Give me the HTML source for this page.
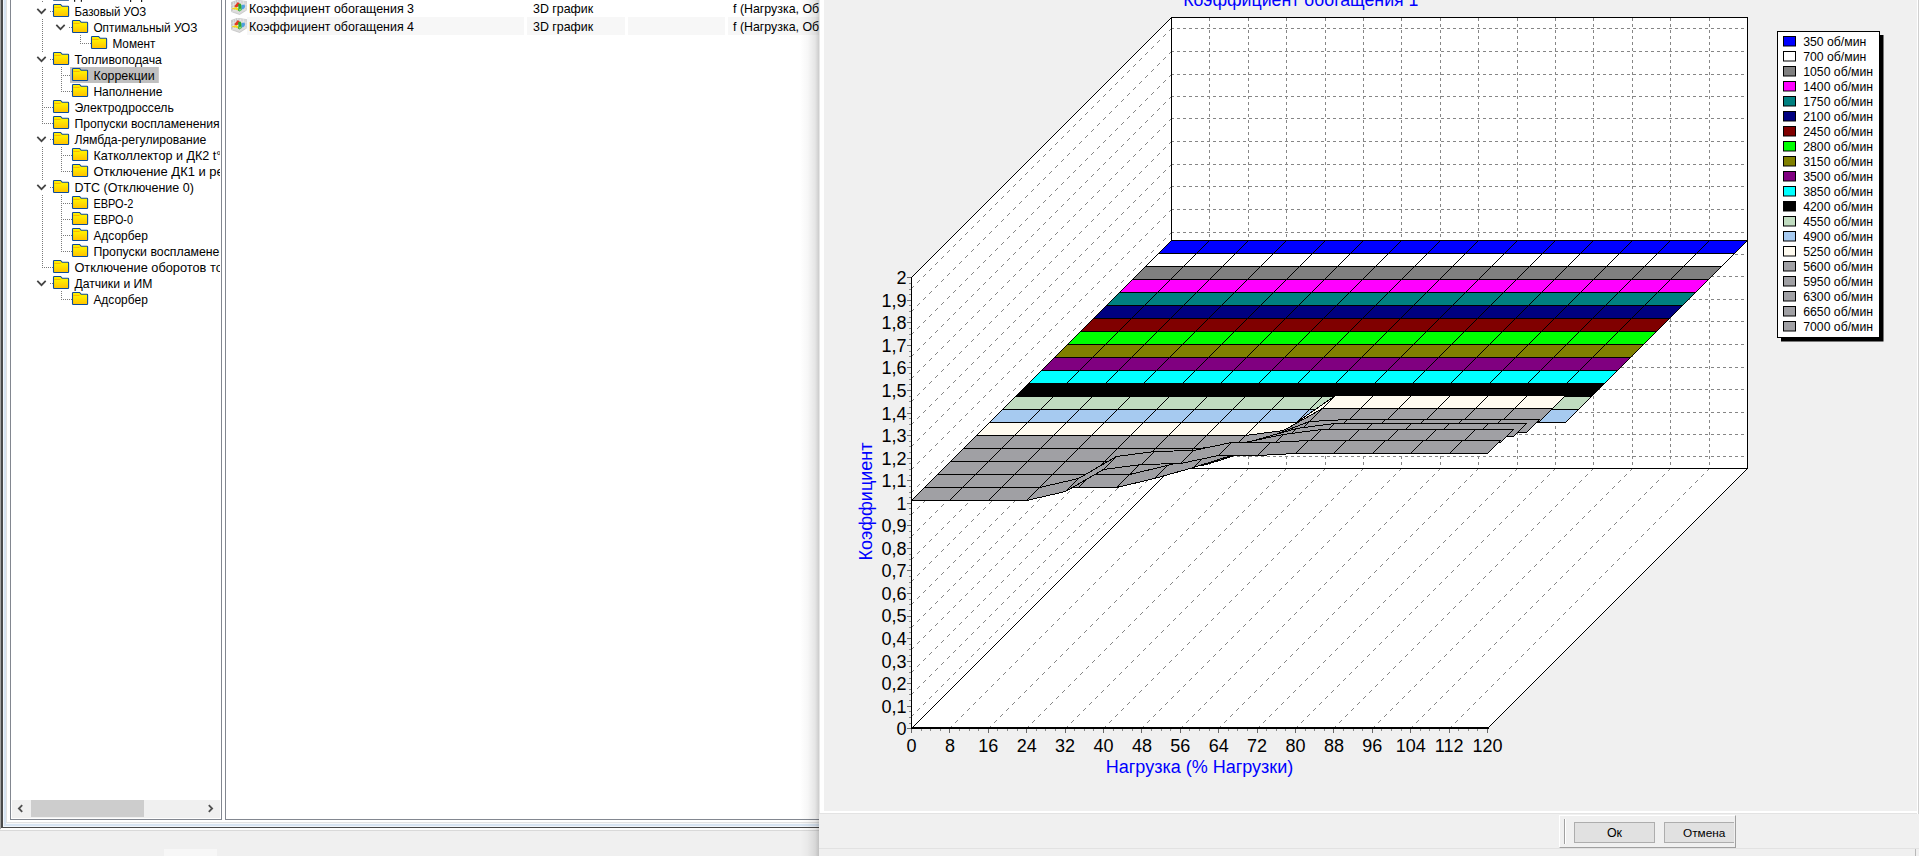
<!DOCTYPE html>
<html><head><meta charset="utf-8"><title>chart</title>
<style>
html,body{margin:0;padding:0;}
body{width:1919px;height:856px;overflow:hidden;background:#f0f0f0;position:relative;font-family:"Liberation Sans", sans-serif;font-size:12.4px;color:#000;}
.abs{position:absolute;}
.lt{position:absolute;white-space:nowrap;line-height:18px;height:18px;margin-top:1px;}
</style></head><body>
<!-- main window left frame -->
<div class="abs" style="left:0;top:0;width:819px;height:828px;background:#fff"></div>
<div class="abs" style="left:0;top:0;width:1px;height:829px;background:#a4a4a4"></div>
<div class="abs" style="left:1px;top:0;width:2px;height:828px;background:#4a4a4a"></div>
<div class="abs" style="left:3px;top:0;width:1px;height:827px;background:#f0f5fc"></div>
<div class="abs" style="left:4px;top:0;width:2px;height:826px;background:#d7e4f2"></div>
<div class="abs" style="left:6px;top:0;width:1px;height:823px;background:#e2e2e2"></div>
<!-- bottom frame lines -->
<div class="abs" style="left:6px;top:822px;width:813px;height:1px;background:#e2e2e2"></div>
<div class="abs" style="left:6px;top:823px;width:813px;height:1px;background:#f6f8fb"></div>
<div class="abs" style="left:4px;top:824px;width:815px;height:2px;background:#d7e4f2"></div>
<div class="abs" style="left:3px;top:826px;width:816px;height:1px;background:#f0f5fc"></div>
<div class="abs" style="left:1px;top:827px;width:818px;height:1px;background:#4a4a4a"></div>
<div class="abs" style="left:1px;top:828px;width:818px;height:2px;background:#fdfdfd"></div>
<div class="abs" style="left:0;top:830px;width:819px;height:1px;background:#d9d9d9"></div>
<!-- tree pane -->
<div class="abs" style="left:10px;top:-2px;width:210px;height:820px;border:1px solid #828790;background:#fff;overflow:hidden"></div>
<div class="abs" style="left:11px;top:0;width:209px;height:800px;overflow:hidden"><div style="position:absolute;left:-11px;top:0"><svg width="221" height="797" viewBox="0 0 221 797" style="position:absolute;left:0;top:0"><defs><linearGradient id="fg" x1="0" y1="0" x2="0" y2="1"><stop offset="0" stop-color="#fff400"/><stop offset="0.35" stop-color="#ffec00"/><stop offset="1" stop-color="#ffc000"/></linearGradient></defs><g fill="#7a7a7a"><rect x="50" y="11" width="1" height="1"/><rect x="52" y="11" width="1" height="1"/><rect x="69" y="27" width="1" height="1"/><rect x="71" y="27" width="1" height="1"/><rect x="80" y="43" width="1" height="1"/><rect x="82" y="43" width="1" height="1"/><rect x="84" y="43" width="1" height="1"/><rect x="86" y="43" width="1" height="1"/><rect x="88" y="43" width="1" height="1"/><rect x="90" y="43" width="1" height="1"/><rect x="50" y="59" width="1" height="1"/><rect x="52" y="59" width="1" height="1"/><rect x="61" y="75" width="1" height="1"/><rect x="63" y="75" width="1" height="1"/><rect x="65" y="75" width="1" height="1"/><rect x="67" y="75" width="1" height="1"/><rect x="69" y="75" width="1" height="1"/><rect x="71" y="75" width="1" height="1"/><rect x="61" y="91" width="1" height="1"/><rect x="63" y="91" width="1" height="1"/><rect x="65" y="91" width="1" height="1"/><rect x="67" y="91" width="1" height="1"/><rect x="69" y="91" width="1" height="1"/><rect x="71" y="91" width="1" height="1"/><rect x="42" y="107" width="1" height="1"/><rect x="44" y="107" width="1" height="1"/><rect x="46" y="107" width="1" height="1"/><rect x="48" y="107" width="1" height="1"/><rect x="50" y="107" width="1" height="1"/><rect x="52" y="107" width="1" height="1"/><rect x="42" y="123" width="1" height="1"/><rect x="44" y="123" width="1" height="1"/><rect x="46" y="123" width="1" height="1"/><rect x="48" y="123" width="1" height="1"/><rect x="50" y="123" width="1" height="1"/><rect x="52" y="123" width="1" height="1"/><rect x="50" y="139" width="1" height="1"/><rect x="52" y="139" width="1" height="1"/><rect x="61" y="155" width="1" height="1"/><rect x="63" y="155" width="1" height="1"/><rect x="65" y="155" width="1" height="1"/><rect x="67" y="155" width="1" height="1"/><rect x="69" y="155" width="1" height="1"/><rect x="71" y="155" width="1" height="1"/><rect x="61" y="171" width="1" height="1"/><rect x="63" y="171" width="1" height="1"/><rect x="65" y="171" width="1" height="1"/><rect x="67" y="171" width="1" height="1"/><rect x="69" y="171" width="1" height="1"/><rect x="71" y="171" width="1" height="1"/><rect x="50" y="187" width="1" height="1"/><rect x="52" y="187" width="1" height="1"/><rect x="61" y="203" width="1" height="1"/><rect x="63" y="203" width="1" height="1"/><rect x="65" y="203" width="1" height="1"/><rect x="67" y="203" width="1" height="1"/><rect x="69" y="203" width="1" height="1"/><rect x="71" y="203" width="1" height="1"/><rect x="61" y="219" width="1" height="1"/><rect x="63" y="219" width="1" height="1"/><rect x="65" y="219" width="1" height="1"/><rect x="67" y="219" width="1" height="1"/><rect x="69" y="219" width="1" height="1"/><rect x="71" y="219" width="1" height="1"/><rect x="61" y="235" width="1" height="1"/><rect x="63" y="235" width="1" height="1"/><rect x="65" y="235" width="1" height="1"/><rect x="67" y="235" width="1" height="1"/><rect x="69" y="235" width="1" height="1"/><rect x="71" y="235" width="1" height="1"/><rect x="61" y="251" width="1" height="1"/><rect x="63" y="251" width="1" height="1"/><rect x="65" y="251" width="1" height="1"/><rect x="67" y="251" width="1" height="1"/><rect x="69" y="251" width="1" height="1"/><rect x="71" y="251" width="1" height="1"/><rect x="42" y="267" width="1" height="1"/><rect x="44" y="267" width="1" height="1"/><rect x="46" y="267" width="1" height="1"/><rect x="48" y="267" width="1" height="1"/><rect x="50" y="267" width="1" height="1"/><rect x="52" y="267" width="1" height="1"/><rect x="50" y="283" width="1" height="1"/><rect x="52" y="283" width="1" height="1"/><rect x="61" y="299" width="1" height="1"/><rect x="63" y="299" width="1" height="1"/><rect x="65" y="299" width="1" height="1"/><rect x="67" y="299" width="1" height="1"/><rect x="69" y="299" width="1" height="1"/><rect x="71" y="299" width="1" height="1"/><rect x="42" y="1" width="1" height="1"/><rect x="42" y="19" width="1" height="1"/><rect x="42" y="21" width="1" height="1"/><rect x="42" y="23" width="1" height="1"/><rect x="42" y="25" width="1" height="1"/><rect x="42" y="27" width="1" height="1"/><rect x="42" y="29" width="1" height="1"/><rect x="42" y="31" width="1" height="1"/><rect x="42" y="33" width="1" height="1"/><rect x="42" y="35" width="1" height="1"/><rect x="42" y="37" width="1" height="1"/><rect x="42" y="39" width="1" height="1"/><rect x="42" y="41" width="1" height="1"/><rect x="42" y="43" width="1" height="1"/><rect x="42" y="45" width="1" height="1"/><rect x="42" y="47" width="1" height="1"/><rect x="42" y="49" width="1" height="1"/><rect x="42" y="51" width="1" height="1"/><rect x="42" y="67" width="1" height="1"/><rect x="42" y="69" width="1" height="1"/><rect x="42" y="71" width="1" height="1"/><rect x="42" y="73" width="1" height="1"/><rect x="42" y="75" width="1" height="1"/><rect x="42" y="77" width="1" height="1"/><rect x="42" y="79" width="1" height="1"/><rect x="42" y="81" width="1" height="1"/><rect x="42" y="83" width="1" height="1"/><rect x="42" y="85" width="1" height="1"/><rect x="42" y="87" width="1" height="1"/><rect x="42" y="89" width="1" height="1"/><rect x="42" y="91" width="1" height="1"/><rect x="42" y="93" width="1" height="1"/><rect x="42" y="95" width="1" height="1"/><rect x="42" y="97" width="1" height="1"/><rect x="42" y="99" width="1" height="1"/><rect x="42" y="101" width="1" height="1"/><rect x="42" y="103" width="1" height="1"/><rect x="42" y="105" width="1" height="1"/><rect x="42" y="107" width="1" height="1"/><rect x="42" y="109" width="1" height="1"/><rect x="42" y="111" width="1" height="1"/><rect x="42" y="113" width="1" height="1"/><rect x="42" y="115" width="1" height="1"/><rect x="42" y="117" width="1" height="1"/><rect x="42" y="119" width="1" height="1"/><rect x="42" y="121" width="1" height="1"/><rect x="42" y="123" width="1" height="1"/><rect x="42" y="147" width="1" height="1"/><rect x="42" y="149" width="1" height="1"/><rect x="42" y="151" width="1" height="1"/><rect x="42" y="153" width="1" height="1"/><rect x="42" y="155" width="1" height="1"/><rect x="42" y="157" width="1" height="1"/><rect x="42" y="159" width="1" height="1"/><rect x="42" y="161" width="1" height="1"/><rect x="42" y="163" width="1" height="1"/><rect x="42" y="165" width="1" height="1"/><rect x="42" y="167" width="1" height="1"/><rect x="42" y="169" width="1" height="1"/><rect x="42" y="171" width="1" height="1"/><rect x="42" y="173" width="1" height="1"/><rect x="42" y="175" width="1" height="1"/><rect x="42" y="177" width="1" height="1"/><rect x="42" y="179" width="1" height="1"/><rect x="42" y="195" width="1" height="1"/><rect x="42" y="197" width="1" height="1"/><rect x="42" y="199" width="1" height="1"/><rect x="42" y="201" width="1" height="1"/><rect x="42" y="203" width="1" height="1"/><rect x="42" y="205" width="1" height="1"/><rect x="42" y="207" width="1" height="1"/><rect x="42" y="209" width="1" height="1"/><rect x="42" y="211" width="1" height="1"/><rect x="42" y="213" width="1" height="1"/><rect x="42" y="215" width="1" height="1"/><rect x="42" y="217" width="1" height="1"/><rect x="42" y="219" width="1" height="1"/><rect x="42" y="221" width="1" height="1"/><rect x="42" y="223" width="1" height="1"/><rect x="42" y="225" width="1" height="1"/><rect x="42" y="227" width="1" height="1"/><rect x="42" y="229" width="1" height="1"/><rect x="42" y="231" width="1" height="1"/><rect x="42" y="233" width="1" height="1"/><rect x="42" y="235" width="1" height="1"/><rect x="42" y="237" width="1" height="1"/><rect x="42" y="239" width="1" height="1"/><rect x="42" y="241" width="1" height="1"/><rect x="42" y="243" width="1" height="1"/><rect x="42" y="245" width="1" height="1"/><rect x="42" y="247" width="1" height="1"/><rect x="42" y="249" width="1" height="1"/><rect x="42" y="251" width="1" height="1"/><rect x="42" y="253" width="1" height="1"/><rect x="42" y="255" width="1" height="1"/><rect x="42" y="257" width="1" height="1"/><rect x="42" y="259" width="1" height="1"/><rect x="42" y="261" width="1" height="1"/><rect x="42" y="263" width="1" height="1"/><rect x="42" y="265" width="1" height="1"/><rect x="42" y="267" width="1" height="1"/><rect x="61" y="67" width="1" height="1"/><rect x="61" y="69" width="1" height="1"/><rect x="61" y="71" width="1" height="1"/><rect x="61" y="73" width="1" height="1"/><rect x="61" y="75" width="1" height="1"/><rect x="61" y="77" width="1" height="1"/><rect x="61" y="79" width="1" height="1"/><rect x="61" y="81" width="1" height="1"/><rect x="61" y="83" width="1" height="1"/><rect x="61" y="85" width="1" height="1"/><rect x="61" y="87" width="1" height="1"/><rect x="61" y="89" width="1" height="1"/><rect x="61" y="91" width="1" height="1"/><rect x="61" y="147" width="1" height="1"/><rect x="61" y="149" width="1" height="1"/><rect x="61" y="151" width="1" height="1"/><rect x="61" y="153" width="1" height="1"/><rect x="61" y="155" width="1" height="1"/><rect x="61" y="157" width="1" height="1"/><rect x="61" y="159" width="1" height="1"/><rect x="61" y="161" width="1" height="1"/><rect x="61" y="163" width="1" height="1"/><rect x="61" y="165" width="1" height="1"/><rect x="61" y="167" width="1" height="1"/><rect x="61" y="169" width="1" height="1"/><rect x="61" y="171" width="1" height="1"/><rect x="61" y="195" width="1" height="1"/><rect x="61" y="197" width="1" height="1"/><rect x="61" y="199" width="1" height="1"/><rect x="61" y="201" width="1" height="1"/><rect x="61" y="203" width="1" height="1"/><rect x="61" y="205" width="1" height="1"/><rect x="61" y="207" width="1" height="1"/><rect x="61" y="209" width="1" height="1"/><rect x="61" y="211" width="1" height="1"/><rect x="61" y="213" width="1" height="1"/><rect x="61" y="215" width="1" height="1"/><rect x="61" y="217" width="1" height="1"/><rect x="61" y="219" width="1" height="1"/><rect x="61" y="221" width="1" height="1"/><rect x="61" y="223" width="1" height="1"/><rect x="61" y="225" width="1" height="1"/><rect x="61" y="227" width="1" height="1"/><rect x="61" y="229" width="1" height="1"/><rect x="61" y="231" width="1" height="1"/><rect x="61" y="233" width="1" height="1"/><rect x="61" y="235" width="1" height="1"/><rect x="61" y="237" width="1" height="1"/><rect x="61" y="239" width="1" height="1"/><rect x="61" y="241" width="1" height="1"/><rect x="61" y="243" width="1" height="1"/><rect x="61" y="245" width="1" height="1"/><rect x="61" y="247" width="1" height="1"/><rect x="61" y="249" width="1" height="1"/><rect x="61" y="251" width="1" height="1"/><rect x="61" y="291" width="1" height="1"/><rect x="61" y="293" width="1" height="1"/><rect x="61" y="295" width="1" height="1"/><rect x="61" y="297" width="1" height="1"/><rect x="61" y="299" width="1" height="1"/><rect x="80" y="35" width="1" height="1"/><rect x="80" y="37" width="1" height="1"/><rect x="80" y="39" width="1" height="1"/><rect x="80" y="41" width="1" height="1"/><rect x="80" y="43" width="1" height="1"/></g><g transform="translate(53 4)"><path d="M1.2,0.5 H7.6 L9.2,2.3 H15 Q15.6,2.3 15.6,3 V11.8 Q15.6,12.5 15,12.5 H1.2 Q0.5,12.5 0.5,11.8 V1.2 Q0.5,0.5 1.2,0.5 Z" fill="url(#fg)" stroke="#0c4a98" stroke-width="1.1"/><path d="M1.3,3.4 H7.6" stroke="#f7a800" stroke-width="0.9"/></g><path d="M37.3,8.8 L41.5,13.2 L45.7,8.8" stroke="#444" stroke-width="1.7" fill="none"/><g transform="translate(72 20)"><path d="M1.2,0.5 H7.6 L9.2,2.3 H15 Q15.6,2.3 15.6,3 V11.8 Q15.6,12.5 15,12.5 H1.2 Q0.5,12.5 0.5,11.8 V1.2 Q0.5,0.5 1.2,0.5 Z" fill="url(#fg)" stroke="#0c4a98" stroke-width="1.1"/><path d="M1.3,3.4 H7.6" stroke="#f7a800" stroke-width="0.9"/></g><path d="M56.3,24.8 L60.5,29.2 L64.7,24.8" stroke="#444" stroke-width="1.7" fill="none"/><g transform="translate(91 36)"><path d="M1.2,0.5 H7.6 L9.2,2.3 H15 Q15.6,2.3 15.6,3 V11.8 Q15.6,12.5 15,12.5 H1.2 Q0.5,12.5 0.5,11.8 V1.2 Q0.5,0.5 1.2,0.5 Z" fill="url(#fg)" stroke="#0c4a98" stroke-width="1.1"/><path d="M1.3,3.4 H7.6" stroke="#f7a800" stroke-width="0.9"/></g><g transform="translate(53 52)"><path d="M1.2,0.5 H7.6 L9.2,2.3 H15 Q15.6,2.3 15.6,3 V11.8 Q15.6,12.5 15,12.5 H1.2 Q0.5,12.5 0.5,11.8 V1.2 Q0.5,0.5 1.2,0.5 Z" fill="url(#fg)" stroke="#0c4a98" stroke-width="1.1"/><path d="M1.3,3.4 H7.6" stroke="#f7a800" stroke-width="0.9"/></g><path d="M37.3,56.8 L41.5,61.2 L45.7,56.8" stroke="#444" stroke-width="1.7" fill="none"/><rect x="70" y="67" width="88.8" height="16" fill="#c0c0c0"/><g transform="translate(72 68)"><path d="M1.2,0.5 H7.6 L9.2,2.3 H15 Q15.6,2.3 15.6,3 V11.8 Q15.6,12.5 15,12.5 H1.2 Q0.5,12.5 0.5,11.8 V1.2 Q0.5,0.5 1.2,0.5 Z" fill="url(#fg)" stroke="#0c4a98" stroke-width="1.1"/><path d="M1.3,3.4 H7.6" stroke="#f7a800" stroke-width="0.9"/></g><g transform="translate(72 84)"><path d="M1.2,0.5 H7.6 L9.2,2.3 H15 Q15.6,2.3 15.6,3 V11.8 Q15.6,12.5 15,12.5 H1.2 Q0.5,12.5 0.5,11.8 V1.2 Q0.5,0.5 1.2,0.5 Z" fill="url(#fg)" stroke="#0c4a98" stroke-width="1.1"/><path d="M1.3,3.4 H7.6" stroke="#f7a800" stroke-width="0.9"/></g><g transform="translate(53 100)"><path d="M1.2,0.5 H7.6 L9.2,2.3 H15 Q15.6,2.3 15.6,3 V11.8 Q15.6,12.5 15,12.5 H1.2 Q0.5,12.5 0.5,11.8 V1.2 Q0.5,0.5 1.2,0.5 Z" fill="url(#fg)" stroke="#0c4a98" stroke-width="1.1"/><path d="M1.3,3.4 H7.6" stroke="#f7a800" stroke-width="0.9"/></g><g transform="translate(53 116)"><path d="M1.2,0.5 H7.6 L9.2,2.3 H15 Q15.6,2.3 15.6,3 V11.8 Q15.6,12.5 15,12.5 H1.2 Q0.5,12.5 0.5,11.8 V1.2 Q0.5,0.5 1.2,0.5 Z" fill="url(#fg)" stroke="#0c4a98" stroke-width="1.1"/><path d="M1.3,3.4 H7.6" stroke="#f7a800" stroke-width="0.9"/></g><g transform="translate(53 132)"><path d="M1.2,0.5 H7.6 L9.2,2.3 H15 Q15.6,2.3 15.6,3 V11.8 Q15.6,12.5 15,12.5 H1.2 Q0.5,12.5 0.5,11.8 V1.2 Q0.5,0.5 1.2,0.5 Z" fill="url(#fg)" stroke="#0c4a98" stroke-width="1.1"/><path d="M1.3,3.4 H7.6" stroke="#f7a800" stroke-width="0.9"/></g><path d="M37.3,136.8 L41.5,141.2 L45.7,136.8" stroke="#444" stroke-width="1.7" fill="none"/><g transform="translate(72 148)"><path d="M1.2,0.5 H7.6 L9.2,2.3 H15 Q15.6,2.3 15.6,3 V11.8 Q15.6,12.5 15,12.5 H1.2 Q0.5,12.5 0.5,11.8 V1.2 Q0.5,0.5 1.2,0.5 Z" fill="url(#fg)" stroke="#0c4a98" stroke-width="1.1"/><path d="M1.3,3.4 H7.6" stroke="#f7a800" stroke-width="0.9"/></g><g transform="translate(72 164)"><path d="M1.2,0.5 H7.6 L9.2,2.3 H15 Q15.6,2.3 15.6,3 V11.8 Q15.6,12.5 15,12.5 H1.2 Q0.5,12.5 0.5,11.8 V1.2 Q0.5,0.5 1.2,0.5 Z" fill="url(#fg)" stroke="#0c4a98" stroke-width="1.1"/><path d="M1.3,3.4 H7.6" stroke="#f7a800" stroke-width="0.9"/></g><g transform="translate(53 180)"><path d="M1.2,0.5 H7.6 L9.2,2.3 H15 Q15.6,2.3 15.6,3 V11.8 Q15.6,12.5 15,12.5 H1.2 Q0.5,12.5 0.5,11.8 V1.2 Q0.5,0.5 1.2,0.5 Z" fill="url(#fg)" stroke="#0c4a98" stroke-width="1.1"/><path d="M1.3,3.4 H7.6" stroke="#f7a800" stroke-width="0.9"/></g><path d="M37.3,184.8 L41.5,189.2 L45.7,184.8" stroke="#444" stroke-width="1.7" fill="none"/><g transform="translate(72 196)"><path d="M1.2,0.5 H7.6 L9.2,2.3 H15 Q15.6,2.3 15.6,3 V11.8 Q15.6,12.5 15,12.5 H1.2 Q0.5,12.5 0.5,11.8 V1.2 Q0.5,0.5 1.2,0.5 Z" fill="url(#fg)" stroke="#0c4a98" stroke-width="1.1"/><path d="M1.3,3.4 H7.6" stroke="#f7a800" stroke-width="0.9"/></g><g transform="translate(72 212)"><path d="M1.2,0.5 H7.6 L9.2,2.3 H15 Q15.6,2.3 15.6,3 V11.8 Q15.6,12.5 15,12.5 H1.2 Q0.5,12.5 0.5,11.8 V1.2 Q0.5,0.5 1.2,0.5 Z" fill="url(#fg)" stroke="#0c4a98" stroke-width="1.1"/><path d="M1.3,3.4 H7.6" stroke="#f7a800" stroke-width="0.9"/></g><g transform="translate(72 228)"><path d="M1.2,0.5 H7.6 L9.2,2.3 H15 Q15.6,2.3 15.6,3 V11.8 Q15.6,12.5 15,12.5 H1.2 Q0.5,12.5 0.5,11.8 V1.2 Q0.5,0.5 1.2,0.5 Z" fill="url(#fg)" stroke="#0c4a98" stroke-width="1.1"/><path d="M1.3,3.4 H7.6" stroke="#f7a800" stroke-width="0.9"/></g><g transform="translate(72 244)"><path d="M1.2,0.5 H7.6 L9.2,2.3 H15 Q15.6,2.3 15.6,3 V11.8 Q15.6,12.5 15,12.5 H1.2 Q0.5,12.5 0.5,11.8 V1.2 Q0.5,0.5 1.2,0.5 Z" fill="url(#fg)" stroke="#0c4a98" stroke-width="1.1"/><path d="M1.3,3.4 H7.6" stroke="#f7a800" stroke-width="0.9"/></g><g transform="translate(53 260)"><path d="M1.2,0.5 H7.6 L9.2,2.3 H15 Q15.6,2.3 15.6,3 V11.8 Q15.6,12.5 15,12.5 H1.2 Q0.5,12.5 0.5,11.8 V1.2 Q0.5,0.5 1.2,0.5 Z" fill="url(#fg)" stroke="#0c4a98" stroke-width="1.1"/><path d="M1.3,3.4 H7.6" stroke="#f7a800" stroke-width="0.9"/></g><g transform="translate(53 276)"><path d="M1.2,0.5 H7.6 L9.2,2.3 H15 Q15.6,2.3 15.6,3 V11.8 Q15.6,12.5 15,12.5 H1.2 Q0.5,12.5 0.5,11.8 V1.2 Q0.5,0.5 1.2,0.5 Z" fill="url(#fg)" stroke="#0c4a98" stroke-width="1.1"/><path d="M1.3,3.4 H7.6" stroke="#f7a800" stroke-width="0.9"/></g><path d="M37.3,280.8 L41.5,285.2 L45.7,280.8" stroke="#444" stroke-width="1.7" fill="none"/><g transform="translate(72 292)"><path d="M1.2,0.5 H7.6 L9.2,2.3 H15 Q15.6,2.3 15.6,3 V11.8 Q15.6,12.5 15,12.5 H1.2 Q0.5,12.5 0.5,11.8 V1.2 Q0.5,0.5 1.2,0.5 Z" fill="url(#fg)" stroke="#0c4a98" stroke-width="1.1"/><path d="M1.3,3.4 H7.6" stroke="#f7a800" stroke-width="0.9"/></g><g transform="translate(53 -12.2)"><path d="M1.2,0.5 H7.6 L9.2,2.3 H15 Q15.6,2.3 15.6,3 V11.8 Q15.6,12.5 15,12.5 H1.2 Q0.5,12.5 0.5,11.8 V1.2 Q0.5,0.5 1.2,0.5 Z" fill="url(#fg)" stroke="#0c4a98" stroke-width="1.1"/><path d="M1.3,3.4 H7.6" stroke="#f7a800" stroke-width="0.9"/></g><g font-family='"Liberation Sans", sans-serif' font-size="12.4" fill="#000"><text x="74.4" y="16.2" textLength="71.9" lengthAdjust="spacingAndGlyphs">Базовый УОЗ</text><text x="93.4" y="32.2" textLength="104.0" lengthAdjust="spacingAndGlyphs">Оптимальный УОЗ</text><text x="112.4" y="48.2" textLength="43.1" lengthAdjust="spacingAndGlyphs">Момент</text><text x="74.4" y="64.2" textLength="87.5" lengthAdjust="spacingAndGlyphs">Топливоподача</text><text x="93.4" y="80.2" textLength="61.3" lengthAdjust="spacingAndGlyphs">Коррекции</text><text x="93.4" y="96.2" textLength="69.0" lengthAdjust="spacingAndGlyphs">Наполнение</text><text x="74.4" y="112.2" textLength="99.4" lengthAdjust="spacingAndGlyphs">Электродроссель</text><text x="74.4" y="128.2" textLength="145.2" lengthAdjust="spacingAndGlyphs">Пропуски воспламенения</text><text x="74.4" y="144.2" textLength="131.9" lengthAdjust="spacingAndGlyphs">Лямбда-регулирование</text><text x="93.4" y="160.2" textLength="127.9" lengthAdjust="spacingAndGlyphs">Катколлектор и ДК2 t°</text><text x="93.4" y="176.2" textLength="135.1" lengthAdjust="spacingAndGlyphs">Отключение ДК1 и рег</text><text x="74.4" y="192.2" textLength="119.4" lengthAdjust="spacingAndGlyphs">DTC (Отключение 0)</text><text x="93.4" y="208.2" textLength="40.0" lengthAdjust="spacingAndGlyphs">ЕВРО-2</text><text x="93.4" y="224.2" textLength="39.6" lengthAdjust="spacingAndGlyphs">ЕВРО-0</text><text x="93.4" y="240.2" textLength="54.4" lengthAdjust="spacingAndGlyphs">Адсорбер</text><text x="93.4" y="256.2" textLength="132.8" lengthAdjust="spacingAndGlyphs">Пропуски воспламенен</text><text x="74.4" y="272.2" textLength="155.3" lengthAdjust="spacingAndGlyphs">Отключение оборотов топ</text><text x="74.4" y="288.2" textLength="78.1" lengthAdjust="spacingAndGlyphs">Датчики и ИМ</text><text x="93.4" y="304.2" textLength="54.4" lengthAdjust="spacingAndGlyphs">Адсорбер</text></g><g fill="#1a1a1a"><rect x="74" y="0" width="1.2" height="1.8"/><rect x="80.8" y="0" width="1.2" height="1.8"/><rect x="130" y="0" width="1.2" height="2"/><rect x="141" y="0" width="1.2" height="2"/></g></svg></div></div>
<!-- h scrollbar -->
<div class="abs" style="left:12px;top:800px;width:208px;height:18px;background:#f0f0f0"></div>
<div class="abs" style="left:31px;top:800px;width:113px;height:17px;background:#cdcdcd"></div>
<svg class="abs" style="left:12px;top:800px" width="208" height="18"><path d="M10.2,5.2 L6.9,8.5 L10.2,11.8" stroke="#505050" stroke-width="1.8" fill="none"/><path d="M196.8,5.2 L200.1,8.5 L196.8,11.8" stroke="#505050" stroke-width="1.8" fill="none"/></svg>
<!-- list pane -->
<div class="abs" style="left:225px;top:-2px;width:700px;height:820px;border:1px solid #828790;background:#fff"></div>
<div class="abs" style="left:247px;top:17px;width:277px;height:18px;background:#f7f7f7"></div>
<div class="abs" style="left:527px;top:17px;width:98px;height:18px;background:#f7f7f7"></div>
<div class="abs" style="left:628px;top:17px;width:97px;height:18px;background:#f7f7f7"></div>
<div class="abs" style="left:728px;top:17px;width:100px;height:18px;background:#f7f7f7"></div>
<svg width="16" height="15" viewBox="0 0 16 15" style="position:absolute;left:231px;top:0px"><path d="M0.3,2.4 L6.5,0.3 L15.7,1.6 L15.7,10 L8.6,14.5 L0.3,11.6 Z" fill="#dcdcdc" stroke="#b4b4b4" stroke-width="0.6"/><path d="M0.3,2.4 L6.5,0.3 L6.5,9.3 L0.3,11.6 Z" fill="#c6c6c6"/><path d="M6.5,0.3 L15.7,1.6 L15.7,10 L6.5,9.3 Z" fill="#d6d6d6"/><path d="M6.5,0.3 V9.3 L0.3,11.6 M6.5,9.3 L15.7,10 M2.4,1.7 V10.8 M4.4,1 V10 M9.5,0.8 V9.5 M12.5,1.2 V9.8 M6.5,3.3 L15.7,4.4 M6.5,6.3 L15.7,7.2 M0.3,5.4 L6.5,3.3 M0.3,8.4 L6.5,6.3" stroke="#ececec" stroke-width="0.6" fill="none"/><path d="M3.3,6.3 L6.8,2.1 L9.2,3.9 L7.4,6.6 L5,7.6 Z" fill="#e23a22"/><path d="M0.9,8.4 L5,6.9 L7.2,8.4 L7.2,10.6 L4.5,9.6 L1,9 Z" fill="#f6d81c"/><path d="M7,4.6 L9.6,3.5 L10.7,6 L10.7,10 L8.6,11.6 L7,10.6 L7.5,7.5 Z" fill="#2fa82f"/><path d="M8,9 L9.6,8.4 L10.2,10 L8.6,11.2 Z" fill="#86d886"/><path d="M10.6,5 L13.6,4.4 L14.1,7 L12.1,9.5 L10.6,9 Z" fill="#4f9fe0"/></svg><svg width="16" height="15" viewBox="0 0 16 15" style="position:absolute;left:231px;top:18px"><path d="M0.3,2.4 L6.5,0.3 L15.7,1.6 L15.7,10 L8.6,14.5 L0.3,11.6 Z" fill="#dcdcdc" stroke="#b4b4b4" stroke-width="0.6"/><path d="M0.3,2.4 L6.5,0.3 L6.5,9.3 L0.3,11.6 Z" fill="#c6c6c6"/><path d="M6.5,0.3 L15.7,1.6 L15.7,10 L6.5,9.3 Z" fill="#d6d6d6"/><path d="M6.5,0.3 V9.3 L0.3,11.6 M6.5,9.3 L15.7,10 M2.4,1.7 V10.8 M4.4,1 V10 M9.5,0.8 V9.5 M12.5,1.2 V9.8 M6.5,3.3 L15.7,4.4 M6.5,6.3 L15.7,7.2 M0.3,5.4 L6.5,3.3 M0.3,8.4 L6.5,6.3" stroke="#ececec" stroke-width="0.6" fill="none"/><path d="M3.3,6.3 L6.8,2.1 L9.2,3.9 L7.4,6.6 L5,7.6 Z" fill="#e23a22"/><path d="M0.9,8.4 L5,6.9 L7.2,8.4 L7.2,10.6 L4.5,9.6 L1,9 Z" fill="#f6d81c"/><path d="M7,4.6 L9.6,3.5 L10.7,6 L10.7,10 L8.6,11.6 L7,10.6 L7.5,7.5 Z" fill="#2fa82f"/><path d="M8,9 L9.6,8.4 L10.2,10 L8.6,11.2 Z" fill="#86d886"/><path d="M10.6,5 L13.6,4.4 L14.1,7 L12.1,9.5 L10.6,9 Z" fill="#4f9fe0"/></svg>
<div class="lt" style="left:249px;top:-1px;font-size:12.45px">Коэффициент обогащения 3</div>
<div class="lt" style="left:249px;top:17px;font-size:12.45px">Коэффициент обогащения 4</div>
<div class="lt" style="left:533px;top:-1px">3D график</div>
<div class="lt" style="left:533px;top:17px">3D график</div>
<div class="lt" style="left:733px;top:-1px">f (Нагрузка, Обороты)</div>
<div class="lt" style="left:733px;top:17px">f (Нагрузка, Обороты)</div>
<!-- small highlight bottom -->
<div class="abs" style="left:164px;top:849px;width:53px;height:7px;background:#f7f7f7"></div>
<!-- dialog shadow -->
<div class="abs" style="left:800px;top:0;width:19px;height:856px;background:linear-gradient(to right,rgba(0,0,0,0) 0%,rgba(0,0,0,0.03) 40%,rgba(0,0,0,0.10) 80%,rgba(0,0,0,0.20) 100%)"></div>
<!-- dialog -->
<div class="abs" style="left:819px;top:0;width:1100px;height:856px;background:#f0f0f0"></div>
<div class="abs" style="left:819px;top:0;width:1px;height:814px;background:#e6e6e6"></div>
<div class="abs" style="left:820px;top:0;width:4px;height:813px;background:#fff"></div>
<div class="abs" style="left:820px;top:811px;width:1097px;height:2px;background:#fff"></div>
<div class="abs" style="left:819px;top:813px;width:1099px;height:1px;background:#e3e3e3"></div>
<div class="abs" style="left:1917px;top:0;width:1px;height:814px;background:#fff"></div>
<div class="abs" style="left:1918px;top:0;width:1px;height:814px;background:#d0d0d0"></div>
<!-- dialog bottom edge -->
<div class="abs" style="left:819px;top:848px;width:1100px;height:1px;background:#e2e2e2"></div>
<div class="abs" style="left:1915px;top:849px;width:1px;height:7px;background:#b8b8b8"></div>
<!-- chart -->
<svg class="abs" style="left:0;top:0" width="1919" height="856" viewBox="0 0 1919 856" shape-rendering="auto">
<polygon points="911.5,728.5 1171.5,468.5 1171.5,17.5 911.5,277.5" fill="#fff" stroke="none"/>
<polygon points="911.5,728.5 1487.5,728.5 1747.5,468.5 1171.5,468.5" fill="#fff"/>
<rect x="1171.5" y="17.5" width="576" height="451" fill="#fff"/>
<defs><path id="dd" d="M0,1h1v-1h1v-1h1v-1h-1v1h-1v1h-1v1zM6,-5h1v-1h1v-1h1v-1h-1v1h-1v1h-1v1zM12,-11h1v-1h1v-1h1v-1h-1v1h-1v1h-1v1zM18,-17h1v-1h1v-1h1v-1h-1v1h-1v1h-1v1zM24,-23h1v-1h1v-1h1v-1h-1v1h-1v1h-1v1zM30,-29h1v-1h1v-1h1v-1h-1v1h-1v1h-1v1zM36,-35h1v-1h1v-1h1v-1h-1v1h-1v1h-1v1zM42,-41h1v-1h1v-1h1v-1h-1v1h-1v1h-1v1zM48,-47h1v-1h1v-1h1v-1h-1v1h-1v1h-1v1zM54,-53h1v-1h1v-1h1v-1h-1v1h-1v1h-1v1zM60,-59h1v-1h1v-1h1v-1h-1v1h-1v1h-1v1zM66,-65h1v-1h1v-1h1v-1h-1v1h-1v1h-1v1zM72,-71h1v-1h1v-1h1v-1h-1v1h-1v1h-1v1zM78,-77h1v-1h1v-1h1v-1h-1v1h-1v1h-1v1zM84,-83h1v-1h1v-1h1v-1h-1v1h-1v1h-1v1zM90,-89h1v-1h1v-1h1v-1h-1v1h-1v1h-1v1zM96,-95h1v-1h1v-1h1v-1h-1v1h-1v1h-1v1zM102,-101h1v-1h1v-1h1v-1h-1v1h-1v1h-1v1zM108,-107h1v-1h1v-1h1v-1h-1v1h-1v1h-1v1zM114,-113h1v-1h1v-1h1v-1h-1v1h-1v1h-1v1zM120,-119h1v-1h1v-1h1v-1h-1v1h-1v1h-1v1zM126,-125h1v-1h1v-1h1v-1h-1v1h-1v1h-1v1zM132,-131h1v-1h1v-1h1v-1h-1v1h-1v1h-1v1zM138,-137h1v-1h1v-1h1v-1h-1v1h-1v1h-1v1zM144,-143h1v-1h1v-1h1v-1h-1v1h-1v1h-1v1zM150,-149h1v-1h1v-1h1v-1h-1v1h-1v1h-1v1zM156,-155h1v-1h1v-1h1v-1h-1v1h-1v1h-1v1zM162,-161h1v-1h1v-1h1v-1h-1v1h-1v1h-1v1zM168,-167h1v-1h1v-1h1v-1h-1v1h-1v1h-1v1zM174,-173h1v-1h1v-1h1v-1h-1v1h-1v1h-1v1zM180,-179h1v-1h1v-1h1v-1h-1v1h-1v1h-1v1zM186,-185h1v-1h1v-1h1v-1h-1v1h-1v1h-1v1zM192,-191h1v-1h1v-1h1v-1h-1v1h-1v1h-1v1zM198,-197h1v-1h1v-1h1v-1h-1v1h-1v1h-1v1zM204,-203h1v-1h1v-1h1v-1h-1v1h-1v1h-1v1zM210,-209h1v-1h1v-1h1v-1h-1v1h-1v1h-1v1zM216,-215h1v-1h1v-1h1v-1h-1v1h-1v1h-1v1zM222,-221h1v-1h1v-1h1v-1h-1v1h-1v1h-1v1zM228,-227h1v-1h1v-1h1v-1h-1v1h-1v1h-1v1zM234,-233h1v-1h1v-1h1v-1h-1v1h-1v1h-1v1zM240,-239h1v-1h1v-1h1v-1h-1v1h-1v1h-1v1zM246,-245h1v-1h1v-1h1v-1h-1v1h-1v1h-1v1zM252,-251h1v-1h1v-1h1v-1h-1v1h-1v1h-1v1zM258,-257h1v-1h1v-1h-1v1h-1v1z" fill="#868686" shape-rendering="crispEdges"/></defs>
<use href="#dd" x="911" y="716"/><use href="#dd" x="911" y="694"/><use href="#dd" x="911" y="672"/><use href="#dd" x="911" y="649"/><use href="#dd" x="911" y="627"/><use href="#dd" x="911" y="604"/><use href="#dd" x="911" y="581"/><use href="#dd" x="911" y="559"/><use href="#dd" x="911" y="536"/><use href="#dd" x="911" y="514"/><use href="#dd" x="911" y="492"/><use href="#dd" x="911" y="469"/><use href="#dd" x="911" y="446"/><use href="#dd" x="911" y="424"/><use href="#dd" x="911" y="401"/><use href="#dd" x="911" y="378"/><use href="#dd" x="911" y="356"/><use href="#dd" x="911" y="334"/><use href="#dd" x="911" y="311"/><use href="#dd" x="911" y="288"/><use href="#dd" x="949" y="728"/><use href="#dd" x="988" y="728"/><use href="#dd" x="1026" y="728"/><use href="#dd" x="1065" y="728"/><use href="#dd" x="1103" y="728"/><use href="#dd" x="1141" y="728"/><use href="#dd" x="1180" y="728"/><use href="#dd" x="1218" y="728"/><use href="#dd" x="1257" y="728"/><use href="#dd" x="1295" y="728"/><use href="#dd" x="1333" y="728"/><use href="#dd" x="1372" y="728"/><use href="#dd" x="1410" y="728"/><use href="#dd" x="1449" y="728"/>
<path d="M1171,456.5 L1744.5,456.5 M1171,434.5 L1744.5,434.5 M1171,412.5 L1744.5,412.5 M1171,389.5 L1744.5,389.5 M1171,367.5 L1744.5,367.5 M1171,344.5 L1744.5,344.5 M1171,321.5 L1744.5,321.5 M1171,299.5 L1744.5,299.5 M1171,276.5 L1744.5,276.5 M1171,254.5 L1744.5,254.5 M1171,232.5 L1744.5,232.5 M1171,209.5 L1744.5,209.5 M1171,186.5 L1744.5,186.5 M1171,164.5 L1744.5,164.5 M1171,141.5 L1744.5,141.5 M1171,118.5 L1744.5,118.5 M1171,96.5 L1744.5,96.5 M1171,74.5 L1744.5,74.5 M1171,51.5 L1744.5,51.5 M1171,28.5 L1744.5,28.5 M1209.5,18 L1209.5,468.5 M1248.5,18 L1248.5,468.5 M1286.5,18 L1286.5,468.5 M1325.5,18 L1325.5,468.5 M1363.5,18 L1363.5,468.5 M1401.5,18 L1401.5,468.5 M1440.5,18 L1440.5,468.5 M1478.5,18 L1478.5,468.5 M1517.5,18 L1517.5,468.5 M1555.5,18 L1555.5,468.5 M1593.5,18 L1593.5,468.5 M1632.5,18 L1632.5,468.5 M1670.5,18 L1670.5,468.5 M1709.5,18 L1709.5,468.5" stroke="#868686" stroke-width="1" stroke-dasharray="3 3" fill="none" shape-rendering="crispEdges"/>
<path d="M911.5,277.5 L1171.5,17.5 L1747.5,17.5 L1747.5,468.5 L1487.5,728.5 M1171.5,17.5 L1171.5,468.5 L1747.5,468.5 M911.5,728.5 L1171.5,468.5" stroke="#000" stroke-width="1" fill="none" shape-rendering="crispEdges"/>
<polygon points="1158.5,253.5 1196.5,253.5 1209.5,240.5 1171.5,240.5" fill="#0000ff" stroke="#000" stroke-width="1" stroke-linejoin="round" shape-rendering="crispEdges"/>
<polygon points="1196.5,253.5 1235.5,253.5 1248.5,240.5 1209.5,240.5" fill="#0000ff" stroke="#000" stroke-width="1" stroke-linejoin="round" shape-rendering="crispEdges"/>
<polygon points="1235.5,253.5 1273.5,253.5 1286.5,240.5 1248.5,240.5" fill="#0000ff" stroke="#000" stroke-width="1" stroke-linejoin="round" shape-rendering="crispEdges"/>
<polygon points="1273.5,253.5 1312.5,253.5 1325.5,240.5 1286.5,240.5" fill="#0000ff" stroke="#000" stroke-width="1" stroke-linejoin="round" shape-rendering="crispEdges"/>
<polygon points="1312.5,253.5 1350.5,253.5 1363.5,240.5 1325.5,240.5" fill="#0000ff" stroke="#000" stroke-width="1" stroke-linejoin="round" shape-rendering="crispEdges"/>
<polygon points="1350.5,253.5 1388.5,253.5 1401.5,240.5 1363.5,240.5" fill="#0000ff" stroke="#000" stroke-width="1" stroke-linejoin="round" shape-rendering="crispEdges"/>
<polygon points="1388.5,253.5 1427.5,253.5 1440.5,240.5 1401.5,240.5" fill="#0000ff" stroke="#000" stroke-width="1" stroke-linejoin="round" shape-rendering="crispEdges"/>
<polygon points="1427.5,253.5 1465.5,253.5 1478.5,240.5 1440.5,240.5" fill="#0000ff" stroke="#000" stroke-width="1" stroke-linejoin="round" shape-rendering="crispEdges"/>
<polygon points="1465.5,253.5 1504.5,253.5 1517.5,240.5 1478.5,240.5" fill="#0000ff" stroke="#000" stroke-width="1" stroke-linejoin="round" shape-rendering="crispEdges"/>
<polygon points="1504.5,253.5 1542.5,253.5 1555.5,240.5 1517.5,240.5" fill="#0000ff" stroke="#000" stroke-width="1" stroke-linejoin="round" shape-rendering="crispEdges"/>
<polygon points="1542.5,253.5 1580.5,253.5 1593.5,240.5 1555.5,240.5" fill="#0000ff" stroke="#000" stroke-width="1" stroke-linejoin="round" shape-rendering="crispEdges"/>
<polygon points="1580.5,253.5 1619.5,253.5 1632.5,240.5 1593.5,240.5" fill="#0000ff" stroke="#000" stroke-width="1" stroke-linejoin="round" shape-rendering="crispEdges"/>
<polygon points="1619.5,253.5 1657.5,253.5 1670.5,240.5 1632.5,240.5" fill="#0000ff" stroke="#000" stroke-width="1" stroke-linejoin="round" shape-rendering="crispEdges"/>
<polygon points="1657.5,253.5 1696.5,253.5 1709.5,240.5 1670.5,240.5" fill="#0000ff" stroke="#000" stroke-width="1" stroke-linejoin="round" shape-rendering="crispEdges"/>
<polygon points="1696.5,253.5 1734.5,253.5 1747.5,240.5 1709.5,240.5" fill="#0000ff" stroke="#000" stroke-width="1" stroke-linejoin="round" shape-rendering="crispEdges"/>
<polygon points="1145.5,266.5 1183.5,266.5 1196.5,253.5 1158.5,253.5" fill="#ffffff" stroke="#000" stroke-width="1" stroke-linejoin="round" shape-rendering="crispEdges"/>
<polygon points="1183.5,266.5 1222.5,266.5 1235.5,253.5 1196.5,253.5" fill="#ffffff" stroke="#000" stroke-width="1" stroke-linejoin="round" shape-rendering="crispEdges"/>
<polygon points="1222.5,266.5 1260.5,266.5 1273.5,253.5 1235.5,253.5" fill="#ffffff" stroke="#000" stroke-width="1" stroke-linejoin="round" shape-rendering="crispEdges"/>
<polygon points="1260.5,266.5 1299.5,266.5 1312.5,253.5 1273.5,253.5" fill="#ffffff" stroke="#000" stroke-width="1" stroke-linejoin="round" shape-rendering="crispEdges"/>
<polygon points="1299.5,266.5 1337.5,266.5 1350.5,253.5 1312.5,253.5" fill="#ffffff" stroke="#000" stroke-width="1" stroke-linejoin="round" shape-rendering="crispEdges"/>
<polygon points="1337.5,266.5 1375.5,266.5 1388.5,253.5 1350.5,253.5" fill="#ffffff" stroke="#000" stroke-width="1" stroke-linejoin="round" shape-rendering="crispEdges"/>
<polygon points="1375.5,266.5 1414.5,266.5 1427.5,253.5 1388.5,253.5" fill="#ffffff" stroke="#000" stroke-width="1" stroke-linejoin="round" shape-rendering="crispEdges"/>
<polygon points="1414.5,266.5 1452.5,266.5 1465.5,253.5 1427.5,253.5" fill="#ffffff" stroke="#000" stroke-width="1" stroke-linejoin="round" shape-rendering="crispEdges"/>
<polygon points="1452.5,266.5 1491.5,266.5 1504.5,253.5 1465.5,253.5" fill="#ffffff" stroke="#000" stroke-width="1" stroke-linejoin="round" shape-rendering="crispEdges"/>
<polygon points="1491.5,266.5 1529.5,266.5 1542.5,253.5 1504.5,253.5" fill="#ffffff" stroke="#000" stroke-width="1" stroke-linejoin="round" shape-rendering="crispEdges"/>
<polygon points="1529.5,266.5 1567.5,266.5 1580.5,253.5 1542.5,253.5" fill="#ffffff" stroke="#000" stroke-width="1" stroke-linejoin="round" shape-rendering="crispEdges"/>
<polygon points="1567.5,266.5 1606.5,266.5 1619.5,253.5 1580.5,253.5" fill="#ffffff" stroke="#000" stroke-width="1" stroke-linejoin="round" shape-rendering="crispEdges"/>
<polygon points="1606.5,266.5 1644.5,266.5 1657.5,253.5 1619.5,253.5" fill="#ffffff" stroke="#000" stroke-width="1" stroke-linejoin="round" shape-rendering="crispEdges"/>
<polygon points="1644.5,266.5 1683.5,266.5 1696.5,253.5 1657.5,253.5" fill="#ffffff" stroke="#000" stroke-width="1" stroke-linejoin="round" shape-rendering="crispEdges"/>
<polygon points="1683.5,266.5 1721.5,266.5 1734.5,253.5 1696.5,253.5" fill="#ffffff" stroke="#000" stroke-width="1" stroke-linejoin="round" shape-rendering="crispEdges"/>
<polygon points="1132.5,279.5 1170.5,279.5 1183.5,266.5 1145.5,266.5" fill="#808080" stroke="#000" stroke-width="1" stroke-linejoin="round" shape-rendering="crispEdges"/>
<polygon points="1170.5,279.5 1209.5,279.5 1222.5,266.5 1183.5,266.5" fill="#808080" stroke="#000" stroke-width="1" stroke-linejoin="round" shape-rendering="crispEdges"/>
<polygon points="1209.5,279.5 1247.5,279.5 1260.5,266.5 1222.5,266.5" fill="#808080" stroke="#000" stroke-width="1" stroke-linejoin="round" shape-rendering="crispEdges"/>
<polygon points="1247.5,279.5 1286.5,279.5 1299.5,266.5 1260.5,266.5" fill="#808080" stroke="#000" stroke-width="1" stroke-linejoin="round" shape-rendering="crispEdges"/>
<polygon points="1286.5,279.5 1324.5,279.5 1337.5,266.5 1299.5,266.5" fill="#808080" stroke="#000" stroke-width="1" stroke-linejoin="round" shape-rendering="crispEdges"/>
<polygon points="1324.5,279.5 1362.5,279.5 1375.5,266.5 1337.5,266.5" fill="#808080" stroke="#000" stroke-width="1" stroke-linejoin="round" shape-rendering="crispEdges"/>
<polygon points="1362.5,279.5 1401.5,279.5 1414.5,266.5 1375.5,266.5" fill="#808080" stroke="#000" stroke-width="1" stroke-linejoin="round" shape-rendering="crispEdges"/>
<polygon points="1401.5,279.5 1439.5,279.5 1452.5,266.5 1414.5,266.5" fill="#808080" stroke="#000" stroke-width="1" stroke-linejoin="round" shape-rendering="crispEdges"/>
<polygon points="1439.5,279.5 1478.5,279.5 1491.5,266.5 1452.5,266.5" fill="#808080" stroke="#000" stroke-width="1" stroke-linejoin="round" shape-rendering="crispEdges"/>
<polygon points="1478.5,279.5 1516.5,279.5 1529.5,266.5 1491.5,266.5" fill="#808080" stroke="#000" stroke-width="1" stroke-linejoin="round" shape-rendering="crispEdges"/>
<polygon points="1516.5,279.5 1554.5,279.5 1567.5,266.5 1529.5,266.5" fill="#808080" stroke="#000" stroke-width="1" stroke-linejoin="round" shape-rendering="crispEdges"/>
<polygon points="1554.5,279.5 1593.5,279.5 1606.5,266.5 1567.5,266.5" fill="#808080" stroke="#000" stroke-width="1" stroke-linejoin="round" shape-rendering="crispEdges"/>
<polygon points="1593.5,279.5 1631.5,279.5 1644.5,266.5 1606.5,266.5" fill="#808080" stroke="#000" stroke-width="1" stroke-linejoin="round" shape-rendering="crispEdges"/>
<polygon points="1631.5,279.5 1670.5,279.5 1683.5,266.5 1644.5,266.5" fill="#808080" stroke="#000" stroke-width="1" stroke-linejoin="round" shape-rendering="crispEdges"/>
<polygon points="1670.5,279.5 1708.5,279.5 1721.5,266.5 1683.5,266.5" fill="#808080" stroke="#000" stroke-width="1" stroke-linejoin="round" shape-rendering="crispEdges"/>
<polygon points="1119.5,292.5 1157.5,292.5 1170.5,279.5 1132.5,279.5" fill="#ff00ff" stroke="#000" stroke-width="1" stroke-linejoin="round" shape-rendering="crispEdges"/>
<polygon points="1157.5,292.5 1196.5,292.5 1209.5,279.5 1170.5,279.5" fill="#ff00ff" stroke="#000" stroke-width="1" stroke-linejoin="round" shape-rendering="crispEdges"/>
<polygon points="1196.5,292.5 1234.5,292.5 1247.5,279.5 1209.5,279.5" fill="#ff00ff" stroke="#000" stroke-width="1" stroke-linejoin="round" shape-rendering="crispEdges"/>
<polygon points="1234.5,292.5 1273.5,292.5 1286.5,279.5 1247.5,279.5" fill="#ff00ff" stroke="#000" stroke-width="1" stroke-linejoin="round" shape-rendering="crispEdges"/>
<polygon points="1273.5,292.5 1311.5,292.5 1324.5,279.5 1286.5,279.5" fill="#ff00ff" stroke="#000" stroke-width="1" stroke-linejoin="round" shape-rendering="crispEdges"/>
<polygon points="1311.5,292.5 1349.5,292.5 1362.5,279.5 1324.5,279.5" fill="#ff00ff" stroke="#000" stroke-width="1" stroke-linejoin="round" shape-rendering="crispEdges"/>
<polygon points="1349.5,292.5 1388.5,292.5 1401.5,279.5 1362.5,279.5" fill="#ff00ff" stroke="#000" stroke-width="1" stroke-linejoin="round" shape-rendering="crispEdges"/>
<polygon points="1388.5,292.5 1426.5,292.5 1439.5,279.5 1401.5,279.5" fill="#ff00ff" stroke="#000" stroke-width="1" stroke-linejoin="round" shape-rendering="crispEdges"/>
<polygon points="1426.5,292.5 1465.5,292.5 1478.5,279.5 1439.5,279.5" fill="#ff00ff" stroke="#000" stroke-width="1" stroke-linejoin="round" shape-rendering="crispEdges"/>
<polygon points="1465.5,292.5 1503.5,292.5 1516.5,279.5 1478.5,279.5" fill="#ff00ff" stroke="#000" stroke-width="1" stroke-linejoin="round" shape-rendering="crispEdges"/>
<polygon points="1503.5,292.5 1541.5,292.5 1554.5,279.5 1516.5,279.5" fill="#ff00ff" stroke="#000" stroke-width="1" stroke-linejoin="round" shape-rendering="crispEdges"/>
<polygon points="1541.5,292.5 1580.5,292.5 1593.5,279.5 1554.5,279.5" fill="#ff00ff" stroke="#000" stroke-width="1" stroke-linejoin="round" shape-rendering="crispEdges"/>
<polygon points="1580.5,292.5 1618.5,292.5 1631.5,279.5 1593.5,279.5" fill="#ff00ff" stroke="#000" stroke-width="1" stroke-linejoin="round" shape-rendering="crispEdges"/>
<polygon points="1618.5,292.5 1657.5,292.5 1670.5,279.5 1631.5,279.5" fill="#ff00ff" stroke="#000" stroke-width="1" stroke-linejoin="round" shape-rendering="crispEdges"/>
<polygon points="1657.5,292.5 1695.5,292.5 1708.5,279.5 1670.5,279.5" fill="#ff00ff" stroke="#000" stroke-width="1" stroke-linejoin="round" shape-rendering="crispEdges"/>
<polygon points="1106.5,305.5 1144.5,305.5 1157.5,292.5 1119.5,292.5" fill="#008080" stroke="#000" stroke-width="1" stroke-linejoin="round" shape-rendering="crispEdges"/>
<polygon points="1144.5,305.5 1183.5,305.5 1196.5,292.5 1157.5,292.5" fill="#008080" stroke="#000" stroke-width="1" stroke-linejoin="round" shape-rendering="crispEdges"/>
<polygon points="1183.5,305.5 1221.5,305.5 1234.5,292.5 1196.5,292.5" fill="#008080" stroke="#000" stroke-width="1" stroke-linejoin="round" shape-rendering="crispEdges"/>
<polygon points="1221.5,305.5 1260.5,305.5 1273.5,292.5 1234.5,292.5" fill="#008080" stroke="#000" stroke-width="1" stroke-linejoin="round" shape-rendering="crispEdges"/>
<polygon points="1260.5,305.5 1298.5,305.5 1311.5,292.5 1273.5,292.5" fill="#008080" stroke="#000" stroke-width="1" stroke-linejoin="round" shape-rendering="crispEdges"/>
<polygon points="1298.5,305.5 1336.5,305.5 1349.5,292.5 1311.5,292.5" fill="#008080" stroke="#000" stroke-width="1" stroke-linejoin="round" shape-rendering="crispEdges"/>
<polygon points="1336.5,305.5 1375.5,305.5 1388.5,292.5 1349.5,292.5" fill="#008080" stroke="#000" stroke-width="1" stroke-linejoin="round" shape-rendering="crispEdges"/>
<polygon points="1375.5,305.5 1413.5,305.5 1426.5,292.5 1388.5,292.5" fill="#008080" stroke="#000" stroke-width="1" stroke-linejoin="round" shape-rendering="crispEdges"/>
<polygon points="1413.5,305.5 1452.5,305.5 1465.5,292.5 1426.5,292.5" fill="#008080" stroke="#000" stroke-width="1" stroke-linejoin="round" shape-rendering="crispEdges"/>
<polygon points="1452.5,305.5 1490.5,305.5 1503.5,292.5 1465.5,292.5" fill="#008080" stroke="#000" stroke-width="1" stroke-linejoin="round" shape-rendering="crispEdges"/>
<polygon points="1490.5,305.5 1528.5,305.5 1541.5,292.5 1503.5,292.5" fill="#008080" stroke="#000" stroke-width="1" stroke-linejoin="round" shape-rendering="crispEdges"/>
<polygon points="1528.5,305.5 1567.5,305.5 1580.5,292.5 1541.5,292.5" fill="#008080" stroke="#000" stroke-width="1" stroke-linejoin="round" shape-rendering="crispEdges"/>
<polygon points="1567.5,305.5 1605.5,305.5 1618.5,292.5 1580.5,292.5" fill="#008080" stroke="#000" stroke-width="1" stroke-linejoin="round" shape-rendering="crispEdges"/>
<polygon points="1605.5,305.5 1644.5,305.5 1657.5,292.5 1618.5,292.5" fill="#008080" stroke="#000" stroke-width="1" stroke-linejoin="round" shape-rendering="crispEdges"/>
<polygon points="1644.5,305.5 1682.5,305.5 1695.5,292.5 1657.5,292.5" fill="#008080" stroke="#000" stroke-width="1" stroke-linejoin="round" shape-rendering="crispEdges"/>
<polygon points="1093.5,318.5 1131.5,318.5 1144.5,305.5 1106.5,305.5" fill="#000080" stroke="#000" stroke-width="1" stroke-linejoin="round" shape-rendering="crispEdges"/>
<polygon points="1131.5,318.5 1170.5,318.5 1183.5,305.5 1144.5,305.5" fill="#000080" stroke="#000" stroke-width="1" stroke-linejoin="round" shape-rendering="crispEdges"/>
<polygon points="1170.5,318.5 1208.5,318.5 1221.5,305.5 1183.5,305.5" fill="#000080" stroke="#000" stroke-width="1" stroke-linejoin="round" shape-rendering="crispEdges"/>
<polygon points="1208.5,318.5 1247.5,318.5 1260.5,305.5 1221.5,305.5" fill="#000080" stroke="#000" stroke-width="1" stroke-linejoin="round" shape-rendering="crispEdges"/>
<polygon points="1247.5,318.5 1285.5,318.5 1298.5,305.5 1260.5,305.5" fill="#000080" stroke="#000" stroke-width="1" stroke-linejoin="round" shape-rendering="crispEdges"/>
<polygon points="1285.5,318.5 1323.5,318.5 1336.5,305.5 1298.5,305.5" fill="#000080" stroke="#000" stroke-width="1" stroke-linejoin="round" shape-rendering="crispEdges"/>
<polygon points="1323.5,318.5 1362.5,318.5 1375.5,305.5 1336.5,305.5" fill="#000080" stroke="#000" stroke-width="1" stroke-linejoin="round" shape-rendering="crispEdges"/>
<polygon points="1362.5,318.5 1400.5,318.5 1413.5,305.5 1375.5,305.5" fill="#000080" stroke="#000" stroke-width="1" stroke-linejoin="round" shape-rendering="crispEdges"/>
<polygon points="1400.5,318.5 1439.5,318.5 1452.5,305.5 1413.5,305.5" fill="#000080" stroke="#000" stroke-width="1" stroke-linejoin="round" shape-rendering="crispEdges"/>
<polygon points="1439.5,318.5 1477.5,318.5 1490.5,305.5 1452.5,305.5" fill="#000080" stroke="#000" stroke-width="1" stroke-linejoin="round" shape-rendering="crispEdges"/>
<polygon points="1477.5,318.5 1515.5,318.5 1528.5,305.5 1490.5,305.5" fill="#000080" stroke="#000" stroke-width="1" stroke-linejoin="round" shape-rendering="crispEdges"/>
<polygon points="1515.5,318.5 1554.5,318.5 1567.5,305.5 1528.5,305.5" fill="#000080" stroke="#000" stroke-width="1" stroke-linejoin="round" shape-rendering="crispEdges"/>
<polygon points="1554.5,318.5 1592.5,318.5 1605.5,305.5 1567.5,305.5" fill="#000080" stroke="#000" stroke-width="1" stroke-linejoin="round" shape-rendering="crispEdges"/>
<polygon points="1592.5,318.5 1631.5,318.5 1644.5,305.5 1605.5,305.5" fill="#000080" stroke="#000" stroke-width="1" stroke-linejoin="round" shape-rendering="crispEdges"/>
<polygon points="1631.5,318.5 1669.5,318.5 1682.5,305.5 1644.5,305.5" fill="#000080" stroke="#000" stroke-width="1" stroke-linejoin="round" shape-rendering="crispEdges"/>
<polygon points="1080.5,331.5 1118.5,331.5 1131.5,318.5 1093.5,318.5" fill="#800000" stroke="#000" stroke-width="1" stroke-linejoin="round" shape-rendering="crispEdges"/>
<polygon points="1118.5,331.5 1157.5,331.5 1170.5,318.5 1131.5,318.5" fill="#800000" stroke="#000" stroke-width="1" stroke-linejoin="round" shape-rendering="crispEdges"/>
<polygon points="1157.5,331.5 1195.5,331.5 1208.5,318.5 1170.5,318.5" fill="#800000" stroke="#000" stroke-width="1" stroke-linejoin="round" shape-rendering="crispEdges"/>
<polygon points="1195.5,331.5 1234.5,331.5 1247.5,318.5 1208.5,318.5" fill="#800000" stroke="#000" stroke-width="1" stroke-linejoin="round" shape-rendering="crispEdges"/>
<polygon points="1234.5,331.5 1272.5,331.5 1285.5,318.5 1247.5,318.5" fill="#800000" stroke="#000" stroke-width="1" stroke-linejoin="round" shape-rendering="crispEdges"/>
<polygon points="1272.5,331.5 1310.5,331.5 1323.5,318.5 1285.5,318.5" fill="#800000" stroke="#000" stroke-width="1" stroke-linejoin="round" shape-rendering="crispEdges"/>
<polygon points="1310.5,331.5 1349.5,331.5 1362.5,318.5 1323.5,318.5" fill="#800000" stroke="#000" stroke-width="1" stroke-linejoin="round" shape-rendering="crispEdges"/>
<polygon points="1349.5,331.5 1387.5,331.5 1400.5,318.5 1362.5,318.5" fill="#800000" stroke="#000" stroke-width="1" stroke-linejoin="round" shape-rendering="crispEdges"/>
<polygon points="1387.5,331.5 1426.5,331.5 1439.5,318.5 1400.5,318.5" fill="#800000" stroke="#000" stroke-width="1" stroke-linejoin="round" shape-rendering="crispEdges"/>
<polygon points="1426.5,331.5 1464.5,331.5 1477.5,318.5 1439.5,318.5" fill="#800000" stroke="#000" stroke-width="1" stroke-linejoin="round" shape-rendering="crispEdges"/>
<polygon points="1464.5,331.5 1502.5,331.5 1515.5,318.5 1477.5,318.5" fill="#800000" stroke="#000" stroke-width="1" stroke-linejoin="round" shape-rendering="crispEdges"/>
<polygon points="1502.5,331.5 1541.5,331.5 1554.5,318.5 1515.5,318.5" fill="#800000" stroke="#000" stroke-width="1" stroke-linejoin="round" shape-rendering="crispEdges"/>
<polygon points="1541.5,331.5 1579.5,331.5 1592.5,318.5 1554.5,318.5" fill="#800000" stroke="#000" stroke-width="1" stroke-linejoin="round" shape-rendering="crispEdges"/>
<polygon points="1579.5,331.5 1618.5,331.5 1631.5,318.5 1592.5,318.5" fill="#800000" stroke="#000" stroke-width="1" stroke-linejoin="round" shape-rendering="crispEdges"/>
<polygon points="1618.5,331.5 1656.5,331.5 1669.5,318.5 1631.5,318.5" fill="#800000" stroke="#000" stroke-width="1" stroke-linejoin="round" shape-rendering="crispEdges"/>
<polygon points="1067.5,344.5 1105.5,344.5 1118.5,331.5 1080.5,331.5" fill="#00ff00" stroke="#000" stroke-width="1" stroke-linejoin="round" shape-rendering="crispEdges"/>
<polygon points="1105.5,344.5 1144.5,344.5 1157.5,331.5 1118.5,331.5" fill="#00ff00" stroke="#000" stroke-width="1" stroke-linejoin="round" shape-rendering="crispEdges"/>
<polygon points="1144.5,344.5 1182.5,344.5 1195.5,331.5 1157.5,331.5" fill="#00ff00" stroke="#000" stroke-width="1" stroke-linejoin="round" shape-rendering="crispEdges"/>
<polygon points="1182.5,344.5 1221.5,344.5 1234.5,331.5 1195.5,331.5" fill="#00ff00" stroke="#000" stroke-width="1" stroke-linejoin="round" shape-rendering="crispEdges"/>
<polygon points="1221.5,344.5 1259.5,344.5 1272.5,331.5 1234.5,331.5" fill="#00ff00" stroke="#000" stroke-width="1" stroke-linejoin="round" shape-rendering="crispEdges"/>
<polygon points="1259.5,344.5 1297.5,344.5 1310.5,331.5 1272.5,331.5" fill="#00ff00" stroke="#000" stroke-width="1" stroke-linejoin="round" shape-rendering="crispEdges"/>
<polygon points="1297.5,344.5 1336.5,344.5 1349.5,331.5 1310.5,331.5" fill="#00ff00" stroke="#000" stroke-width="1" stroke-linejoin="round" shape-rendering="crispEdges"/>
<polygon points="1336.5,344.5 1374.5,344.5 1387.5,331.5 1349.5,331.5" fill="#00ff00" stroke="#000" stroke-width="1" stroke-linejoin="round" shape-rendering="crispEdges"/>
<polygon points="1374.5,344.5 1413.5,344.5 1426.5,331.5 1387.5,331.5" fill="#00ff00" stroke="#000" stroke-width="1" stroke-linejoin="round" shape-rendering="crispEdges"/>
<polygon points="1413.5,344.5 1451.5,344.5 1464.5,331.5 1426.5,331.5" fill="#00ff00" stroke="#000" stroke-width="1" stroke-linejoin="round" shape-rendering="crispEdges"/>
<polygon points="1451.5,344.5 1489.5,344.5 1502.5,331.5 1464.5,331.5" fill="#00ff00" stroke="#000" stroke-width="1" stroke-linejoin="round" shape-rendering="crispEdges"/>
<polygon points="1489.5,344.5 1528.5,344.5 1541.5,331.5 1502.5,331.5" fill="#00ff00" stroke="#000" stroke-width="1" stroke-linejoin="round" shape-rendering="crispEdges"/>
<polygon points="1528.5,344.5 1566.5,344.5 1579.5,331.5 1541.5,331.5" fill="#00ff00" stroke="#000" stroke-width="1" stroke-linejoin="round" shape-rendering="crispEdges"/>
<polygon points="1566.5,344.5 1605.5,344.5 1618.5,331.5 1579.5,331.5" fill="#00ff00" stroke="#000" stroke-width="1" stroke-linejoin="round" shape-rendering="crispEdges"/>
<polygon points="1605.5,344.5 1643.5,344.5 1656.5,331.5 1618.5,331.5" fill="#00ff00" stroke="#000" stroke-width="1" stroke-linejoin="round" shape-rendering="crispEdges"/>
<polygon points="1054.5,357.5 1092.5,357.5 1105.5,344.5 1067.5,344.5" fill="#808000" stroke="#000" stroke-width="1" stroke-linejoin="round" shape-rendering="crispEdges"/>
<polygon points="1092.5,357.5 1131.5,357.5 1144.5,344.5 1105.5,344.5" fill="#808000" stroke="#000" stroke-width="1" stroke-linejoin="round" shape-rendering="crispEdges"/>
<polygon points="1131.5,357.5 1169.5,357.5 1182.5,344.5 1144.5,344.5" fill="#808000" stroke="#000" stroke-width="1" stroke-linejoin="round" shape-rendering="crispEdges"/>
<polygon points="1169.5,357.5 1208.5,357.5 1221.5,344.5 1182.5,344.5" fill="#808000" stroke="#000" stroke-width="1" stroke-linejoin="round" shape-rendering="crispEdges"/>
<polygon points="1208.5,357.5 1246.5,357.5 1259.5,344.5 1221.5,344.5" fill="#808000" stroke="#000" stroke-width="1" stroke-linejoin="round" shape-rendering="crispEdges"/>
<polygon points="1246.5,357.5 1284.5,357.5 1297.5,344.5 1259.5,344.5" fill="#808000" stroke="#000" stroke-width="1" stroke-linejoin="round" shape-rendering="crispEdges"/>
<polygon points="1284.5,357.5 1323.5,357.5 1336.5,344.5 1297.5,344.5" fill="#808000" stroke="#000" stroke-width="1" stroke-linejoin="round" shape-rendering="crispEdges"/>
<polygon points="1323.5,357.5 1361.5,357.5 1374.5,344.5 1336.5,344.5" fill="#808000" stroke="#000" stroke-width="1" stroke-linejoin="round" shape-rendering="crispEdges"/>
<polygon points="1361.5,357.5 1400.5,357.5 1413.5,344.5 1374.5,344.5" fill="#808000" stroke="#000" stroke-width="1" stroke-linejoin="round" shape-rendering="crispEdges"/>
<polygon points="1400.5,357.5 1438.5,357.5 1451.5,344.5 1413.5,344.5" fill="#808000" stroke="#000" stroke-width="1" stroke-linejoin="round" shape-rendering="crispEdges"/>
<polygon points="1438.5,357.5 1476.5,357.5 1489.5,344.5 1451.5,344.5" fill="#808000" stroke="#000" stroke-width="1" stroke-linejoin="round" shape-rendering="crispEdges"/>
<polygon points="1476.5,357.5 1515.5,357.5 1528.5,344.5 1489.5,344.5" fill="#808000" stroke="#000" stroke-width="1" stroke-linejoin="round" shape-rendering="crispEdges"/>
<polygon points="1515.5,357.5 1553.5,357.5 1566.5,344.5 1528.5,344.5" fill="#808000" stroke="#000" stroke-width="1" stroke-linejoin="round" shape-rendering="crispEdges"/>
<polygon points="1553.5,357.5 1592.5,357.5 1605.5,344.5 1566.5,344.5" fill="#808000" stroke="#000" stroke-width="1" stroke-linejoin="round" shape-rendering="crispEdges"/>
<polygon points="1592.5,357.5 1630.5,357.5 1643.5,344.5 1605.5,344.5" fill="#808000" stroke="#000" stroke-width="1" stroke-linejoin="round" shape-rendering="crispEdges"/>
<polygon points="1041.5,370.5 1079.5,370.5 1092.5,357.5 1054.5,357.5" fill="#800080" stroke="#000" stroke-width="1" stroke-linejoin="round" shape-rendering="crispEdges"/>
<polygon points="1079.5,370.5 1118.5,370.5 1131.5,357.5 1092.5,357.5" fill="#800080" stroke="#000" stroke-width="1" stroke-linejoin="round" shape-rendering="crispEdges"/>
<polygon points="1118.5,370.5 1156.5,370.5 1169.5,357.5 1131.5,357.5" fill="#800080" stroke="#000" stroke-width="1" stroke-linejoin="round" shape-rendering="crispEdges"/>
<polygon points="1156.5,370.5 1195.5,370.5 1208.5,357.5 1169.5,357.5" fill="#800080" stroke="#000" stroke-width="1" stroke-linejoin="round" shape-rendering="crispEdges"/>
<polygon points="1195.5,370.5 1233.5,370.5 1246.5,357.5 1208.5,357.5" fill="#800080" stroke="#000" stroke-width="1" stroke-linejoin="round" shape-rendering="crispEdges"/>
<polygon points="1233.5,370.5 1271.5,370.5 1284.5,357.5 1246.5,357.5" fill="#800080" stroke="#000" stroke-width="1" stroke-linejoin="round" shape-rendering="crispEdges"/>
<polygon points="1271.5,370.5 1310.5,370.5 1323.5,357.5 1284.5,357.5" fill="#800080" stroke="#000" stroke-width="1" stroke-linejoin="round" shape-rendering="crispEdges"/>
<polygon points="1310.5,370.5 1348.5,370.5 1361.5,357.5 1323.5,357.5" fill="#800080" stroke="#000" stroke-width="1" stroke-linejoin="round" shape-rendering="crispEdges"/>
<polygon points="1348.5,370.5 1387.5,370.5 1400.5,357.5 1361.5,357.5" fill="#800080" stroke="#000" stroke-width="1" stroke-linejoin="round" shape-rendering="crispEdges"/>
<polygon points="1387.5,370.5 1425.5,370.5 1438.5,357.5 1400.5,357.5" fill="#800080" stroke="#000" stroke-width="1" stroke-linejoin="round" shape-rendering="crispEdges"/>
<polygon points="1425.5,370.5 1463.5,370.5 1476.5,357.5 1438.5,357.5" fill="#800080" stroke="#000" stroke-width="1" stroke-linejoin="round" shape-rendering="crispEdges"/>
<polygon points="1463.5,370.5 1502.5,370.5 1515.5,357.5 1476.5,357.5" fill="#800080" stroke="#000" stroke-width="1" stroke-linejoin="round" shape-rendering="crispEdges"/>
<polygon points="1502.5,370.5 1540.5,370.5 1553.5,357.5 1515.5,357.5" fill="#800080" stroke="#000" stroke-width="1" stroke-linejoin="round" shape-rendering="crispEdges"/>
<polygon points="1540.5,370.5 1579.5,370.5 1592.5,357.5 1553.5,357.5" fill="#800080" stroke="#000" stroke-width="1" stroke-linejoin="round" shape-rendering="crispEdges"/>
<polygon points="1579.5,370.5 1617.5,370.5 1630.5,357.5 1592.5,357.5" fill="#800080" stroke="#000" stroke-width="1" stroke-linejoin="round" shape-rendering="crispEdges"/>
<polygon points="1028.5,383.5 1066.5,383.5 1079.5,370.5 1041.5,370.5" fill="#00ffff" stroke="#000" stroke-width="1" stroke-linejoin="round" shape-rendering="crispEdges"/>
<polygon points="1066.5,383.5 1105.5,383.5 1118.5,370.5 1079.5,370.5" fill="#00ffff" stroke="#000" stroke-width="1" stroke-linejoin="round" shape-rendering="crispEdges"/>
<polygon points="1105.5,383.5 1143.5,383.5 1156.5,370.5 1118.5,370.5" fill="#00ffff" stroke="#000" stroke-width="1" stroke-linejoin="round" shape-rendering="crispEdges"/>
<polygon points="1143.5,383.5 1182.5,383.5 1195.5,370.5 1156.5,370.5" fill="#00ffff" stroke="#000" stroke-width="1" stroke-linejoin="round" shape-rendering="crispEdges"/>
<polygon points="1182.5,383.5 1220.5,383.5 1233.5,370.5 1195.5,370.5" fill="#00ffff" stroke="#000" stroke-width="1" stroke-linejoin="round" shape-rendering="crispEdges"/>
<polygon points="1220.5,383.5 1258.5,383.5 1271.5,370.5 1233.5,370.5" fill="#00ffff" stroke="#000" stroke-width="1" stroke-linejoin="round" shape-rendering="crispEdges"/>
<polygon points="1258.5,383.5 1297.5,383.5 1310.5,370.5 1271.5,370.5" fill="#00ffff" stroke="#000" stroke-width="1" stroke-linejoin="round" shape-rendering="crispEdges"/>
<polygon points="1297.5,383.5 1335.5,383.5 1348.5,370.5 1310.5,370.5" fill="#00ffff" stroke="#000" stroke-width="1" stroke-linejoin="round" shape-rendering="crispEdges"/>
<polygon points="1335.5,383.5 1374.5,383.5 1387.5,370.5 1348.5,370.5" fill="#00ffff" stroke="#000" stroke-width="1" stroke-linejoin="round" shape-rendering="crispEdges"/>
<polygon points="1374.5,383.5 1412.5,383.5 1425.5,370.5 1387.5,370.5" fill="#00ffff" stroke="#000" stroke-width="1" stroke-linejoin="round" shape-rendering="crispEdges"/>
<polygon points="1412.5,383.5 1450.5,383.5 1463.5,370.5 1425.5,370.5" fill="#00ffff" stroke="#000" stroke-width="1" stroke-linejoin="round" shape-rendering="crispEdges"/>
<polygon points="1450.5,383.5 1489.5,383.5 1502.5,370.5 1463.5,370.5" fill="#00ffff" stroke="#000" stroke-width="1" stroke-linejoin="round" shape-rendering="crispEdges"/>
<polygon points="1489.5,383.5 1527.5,383.5 1540.5,370.5 1502.5,370.5" fill="#00ffff" stroke="#000" stroke-width="1" stroke-linejoin="round" shape-rendering="crispEdges"/>
<polygon points="1527.5,383.5 1566.5,383.5 1579.5,370.5 1540.5,370.5" fill="#00ffff" stroke="#000" stroke-width="1" stroke-linejoin="round" shape-rendering="crispEdges"/>
<polygon points="1566.5,383.5 1604.5,383.5 1617.5,370.5 1579.5,370.5" fill="#00ffff" stroke="#000" stroke-width="1" stroke-linejoin="round" shape-rendering="crispEdges"/>
<polygon points="1015.5,396.5 1053.5,396.5 1066.5,383.5 1028.5,383.5" fill="#000000" stroke="#000" stroke-width="1" stroke-linejoin="round" shape-rendering="crispEdges"/>
<polygon points="1053.5,396.5 1092.5,396.5 1105.5,383.5 1066.5,383.5" fill="#000000" stroke="#000" stroke-width="1" stroke-linejoin="round" shape-rendering="crispEdges"/>
<polygon points="1092.5,396.5 1130.5,396.5 1143.5,383.5 1105.5,383.5" fill="#000000" stroke="#000" stroke-width="1" stroke-linejoin="round" shape-rendering="crispEdges"/>
<polygon points="1130.5,396.5 1169.5,396.5 1182.5,383.5 1143.5,383.5" fill="#000000" stroke="#000" stroke-width="1" stroke-linejoin="round" shape-rendering="crispEdges"/>
<polygon points="1169.5,396.5 1207.5,396.5 1220.5,383.5 1182.5,383.5" fill="#000000" stroke="#000" stroke-width="1" stroke-linejoin="round" shape-rendering="crispEdges"/>
<polygon points="1207.5,396.5 1245.5,396.5 1258.5,383.5 1220.5,383.5" fill="#000000" stroke="#000" stroke-width="1" stroke-linejoin="round" shape-rendering="crispEdges"/>
<polygon points="1245.5,396.5 1284.5,396.5 1297.5,383.5 1258.5,383.5" fill="#000000" stroke="#000" stroke-width="1" stroke-linejoin="round" shape-rendering="crispEdges"/>
<polygon points="1284.5,396.5 1322.5,396.5 1335.5,383.5 1297.5,383.5" fill="#000000" stroke="#000" stroke-width="1" stroke-linejoin="round" shape-rendering="crispEdges"/>
<polygon points="1322.5,396.5 1361.5,396.5 1374.5,383.5 1335.5,383.5" fill="#000000" stroke="#000" stroke-width="1" stroke-linejoin="round" shape-rendering="crispEdges"/>
<polygon points="1361.5,396.5 1399.5,396.5 1412.5,383.5 1374.5,383.5" fill="#000000" stroke="#000" stroke-width="1" stroke-linejoin="round" shape-rendering="crispEdges"/>
<polygon points="1399.5,396.5 1437.5,396.5 1450.5,383.5 1412.5,383.5" fill="#000000" stroke="#000" stroke-width="1" stroke-linejoin="round" shape-rendering="crispEdges"/>
<polygon points="1437.5,396.5 1476.5,396.5 1489.5,383.5 1450.5,383.5" fill="#000000" stroke="#000" stroke-width="1" stroke-linejoin="round" shape-rendering="crispEdges"/>
<polygon points="1476.5,396.5 1514.5,396.5 1527.5,383.5 1489.5,383.5" fill="#000000" stroke="#000" stroke-width="1" stroke-linejoin="round" shape-rendering="crispEdges"/>
<polygon points="1514.5,396.5 1553.5,396.5 1566.5,383.5 1527.5,383.5" fill="#000000" stroke="#000" stroke-width="1" stroke-linejoin="round" shape-rendering="crispEdges"/>
<polygon points="1553.5,396.5 1591.5,396.5 1604.5,383.5 1566.5,383.5" fill="#000000" stroke="#000" stroke-width="1" stroke-linejoin="round" shape-rendering="crispEdges"/>
<polygon points="1002.5,409.5 1040.5,409.5 1053.5,396.5 1015.5,396.5" fill="#c0dcc0" stroke="#000" stroke-width="1" stroke-linejoin="round" shape-rendering="crispEdges"/>
<polygon points="1040.5,409.5 1079.5,409.5 1092.5,396.5 1053.5,396.5" fill="#c0dcc0" stroke="#000" stroke-width="1" stroke-linejoin="round" shape-rendering="crispEdges"/>
<polygon points="1079.5,409.5 1117.5,409.5 1130.5,396.5 1092.5,396.5" fill="#c0dcc0" stroke="#000" stroke-width="1" stroke-linejoin="round" shape-rendering="crispEdges"/>
<polygon points="1117.5,409.5 1156.5,409.5 1169.5,396.5 1130.5,396.5" fill="#c0dcc0" stroke="#000" stroke-width="1" stroke-linejoin="round" shape-rendering="crispEdges"/>
<polygon points="1156.5,409.5 1194.5,409.5 1207.5,396.5 1169.5,396.5" fill="#c0dcc0" stroke="#000" stroke-width="1" stroke-linejoin="round" shape-rendering="crispEdges"/>
<polygon points="1194.5,409.5 1232.5,409.5 1245.5,396.5 1207.5,396.5" fill="#c0dcc0" stroke="#000" stroke-width="1" stroke-linejoin="round" shape-rendering="crispEdges"/>
<polygon points="1232.5,409.5 1271.5,409.5 1284.5,396.5 1245.5,396.5" fill="#c0dcc0" stroke="#000" stroke-width="1" stroke-linejoin="round" shape-rendering="crispEdges"/>
<polygon points="1271.5,409.5 1309.5,409.5 1322.5,396.5 1284.5,396.5" fill="#c0dcc0" stroke="#000" stroke-width="1" stroke-linejoin="round" shape-rendering="crispEdges"/>
<polygon points="1309.5,409.5 1348.5,409.5 1361.5,396.5 1322.5,396.5" fill="#c0dcc0" stroke="#000" stroke-width="1" stroke-linejoin="round" shape-rendering="crispEdges"/>
<polygon points="1348.5,409.5 1386.5,409.5 1399.5,396.5 1361.5,396.5" fill="#c0dcc0" stroke="#000" stroke-width="1" stroke-linejoin="round" shape-rendering="crispEdges"/>
<polygon points="1386.5,409.5 1424.5,409.5 1437.5,396.5 1399.5,396.5" fill="#c0dcc0" stroke="#000" stroke-width="1" stroke-linejoin="round" shape-rendering="crispEdges"/>
<polygon points="1424.5,409.5 1463.5,409.5 1476.5,396.5 1437.5,396.5" fill="#c0dcc0" stroke="#000" stroke-width="1" stroke-linejoin="round" shape-rendering="crispEdges"/>
<polygon points="1463.5,409.5 1501.5,409.5 1514.5,396.5 1476.5,396.5" fill="#c0dcc0" stroke="#000" stroke-width="1" stroke-linejoin="round" shape-rendering="crispEdges"/>
<polygon points="1501.5,409.5 1540.5,409.5 1553.5,396.5 1514.5,396.5" fill="#c0dcc0" stroke="#000" stroke-width="1" stroke-linejoin="round" shape-rendering="crispEdges"/>
<polygon points="1540.5,409.5 1578.5,409.5 1591.5,396.5 1553.5,396.5" fill="#c0dcc0" stroke="#000" stroke-width="1" stroke-linejoin="round" shape-rendering="crispEdges"/>
<polygon points="989.5,422.5 1027.5,422.5 1040.5,409.5 1002.5,409.5" fill="#a6caf0" stroke="#000" stroke-width="1" stroke-linejoin="round" shape-rendering="crispEdges"/>
<polygon points="1027.5,422.5 1066.5,422.5 1079.5,409.5 1040.5,409.5" fill="#a6caf0" stroke="#000" stroke-width="1" stroke-linejoin="round" shape-rendering="crispEdges"/>
<polygon points="1066.5,422.5 1104.5,422.5 1117.5,409.5 1079.5,409.5" fill="#a6caf0" stroke="#000" stroke-width="1" stroke-linejoin="round" shape-rendering="crispEdges"/>
<polygon points="1104.5,422.5 1143.5,422.5 1156.5,409.5 1117.5,409.5" fill="#a6caf0" stroke="#000" stroke-width="1" stroke-linejoin="round" shape-rendering="crispEdges"/>
<polygon points="1143.5,422.5 1181.5,422.5 1194.5,409.5 1156.5,409.5" fill="#a6caf0" stroke="#000" stroke-width="1" stroke-linejoin="round" shape-rendering="crispEdges"/>
<polygon points="1181.5,422.5 1219.5,422.5 1232.5,409.5 1194.5,409.5" fill="#a6caf0" stroke="#000" stroke-width="1" stroke-linejoin="round" shape-rendering="crispEdges"/>
<polygon points="1219.5,422.5 1258.5,422.5 1271.5,409.5 1232.5,409.5" fill="#a6caf0" stroke="#000" stroke-width="1" stroke-linejoin="round" shape-rendering="crispEdges"/>
<polygon points="1258.5,422.5 1296.5,422.5 1309.5,409.5 1271.5,409.5" fill="#a6caf0" stroke="#000" stroke-width="1" stroke-linejoin="round" shape-rendering="crispEdges"/>
<polygon points="1296.5,422.5 1335.5,422.5 1348.5,409.5 1309.5,409.5" fill="#a6caf0" stroke="#000" stroke-width="1" stroke-linejoin="round" shape-rendering="crispEdges"/>
<polygon points="1335.5,422.5 1373.5,422.5 1386.5,409.5 1348.5,409.5" fill="#a6caf0" stroke="#000" stroke-width="1" stroke-linejoin="round" shape-rendering="crispEdges"/>
<polygon points="1373.5,422.5 1411.5,422.5 1424.5,409.5 1386.5,409.5" fill="#a6caf0" stroke="#000" stroke-width="1" stroke-linejoin="round" shape-rendering="crispEdges"/>
<polygon points="1411.5,422.5 1450.5,422.5 1463.5,409.5 1424.5,409.5" fill="#a6caf0" stroke="#000" stroke-width="1" stroke-linejoin="round" shape-rendering="crispEdges"/>
<polygon points="1450.5,422.5 1488.5,422.5 1501.5,409.5 1463.5,409.5" fill="#a6caf0" stroke="#000" stroke-width="1" stroke-linejoin="round" shape-rendering="crispEdges"/>
<polygon points="1488.5,422.5 1527.5,422.5 1540.5,409.5 1501.5,409.5" fill="#a6caf0" stroke="#000" stroke-width="1" stroke-linejoin="round" shape-rendering="crispEdges"/>
<polygon points="1527.5,422.5 1565.5,422.5 1578.5,409.5 1540.5,409.5" fill="#a6caf0" stroke="#000" stroke-width="1" stroke-linejoin="round" shape-rendering="crispEdges"/>
<polygon points="976.5,435.5 1014.5,435.5 1027.5,422.5 989.5,422.5" fill="#fffbf0" stroke="#000" stroke-width="1" stroke-linejoin="round" shape-rendering="crispEdges"/>
<polygon points="1014.5,435.5 1053.5,435.5 1066.5,422.5 1027.5,422.5" fill="#fffbf0" stroke="#000" stroke-width="1" stroke-linejoin="round" shape-rendering="crispEdges"/>
<polygon points="1053.5,435.5 1091.5,435.5 1104.5,422.5 1066.5,422.5" fill="#fffbf0" stroke="#000" stroke-width="1" stroke-linejoin="round" shape-rendering="crispEdges"/>
<polygon points="1091.5,435.5 1130.5,435.5 1143.5,422.5 1104.5,422.5" fill="#fffbf0" stroke="#000" stroke-width="1" stroke-linejoin="round" shape-rendering="crispEdges"/>
<polygon points="1130.5,435.5 1168.5,435.5 1181.5,422.5 1143.5,422.5" fill="#fffbf0" stroke="#000" stroke-width="1" stroke-linejoin="round" shape-rendering="crispEdges"/>
<polygon points="1168.5,435.5 1206.5,435.5 1219.5,422.5 1181.5,422.5" fill="#fffbf0" stroke="#000" stroke-width="1" stroke-linejoin="round" shape-rendering="crispEdges"/>
<polygon points="1206.5,435.5 1245.5,435.5 1258.5,422.5 1219.5,422.5" fill="#fffbf0" stroke="#000" stroke-width="1" stroke-linejoin="round" shape-rendering="crispEdges"/>
<polygon points="1245.5,435.5 1283.5,435.5 1296.5,422.5 1258.5,422.5" fill="#fffbf0" stroke="#000" stroke-width="1" stroke-linejoin="round" shape-rendering="crispEdges"/>
<polygon points="1283.5,435.5 1322.5,408.5 1335.5,395.5 1296.5,422.5" fill="#fffbf0" stroke="#000" stroke-width="1" stroke-linejoin="round" shape-rendering="crispEdges"/>
<polygon points="1322.5,408.5 1360.5,408.5 1373.5,395.5 1335.5,395.5" fill="#fffbf0" stroke="#000" stroke-width="1" stroke-linejoin="round" shape-rendering="crispEdges"/>
<polygon points="1360.5,408.5 1398.5,408.5 1411.5,395.5 1373.5,395.5" fill="#fffbf0" stroke="#000" stroke-width="1" stroke-linejoin="round" shape-rendering="crispEdges"/>
<polygon points="1398.5,408.5 1437.5,408.5 1450.5,395.5 1411.5,395.5" fill="#fffbf0" stroke="#000" stroke-width="1" stroke-linejoin="round" shape-rendering="crispEdges"/>
<polygon points="1437.5,408.5 1475.5,408.5 1488.5,395.5 1450.5,395.5" fill="#fffbf0" stroke="#000" stroke-width="1" stroke-linejoin="round" shape-rendering="crispEdges"/>
<polygon points="1475.5,408.5 1514.5,408.5 1527.5,395.5 1488.5,395.5" fill="#fffbf0" stroke="#000" stroke-width="1" stroke-linejoin="round" shape-rendering="crispEdges"/>
<polygon points="1514.5,408.5 1552.5,408.5 1565.5,395.5 1527.5,395.5" fill="#fffbf0" stroke="#000" stroke-width="1" stroke-linejoin="round" shape-rendering="crispEdges"/>
<polygon points="963.5,448.5 1001.5,448.5 1014.5,435.5 976.5,435.5" fill="#a0a0a4" stroke="#000" stroke-width="1" stroke-linejoin="round" shape-rendering="crispEdges"/>
<polygon points="1001.5,448.5 1040.5,448.5 1053.5,435.5 1014.5,435.5" fill="#a0a0a4" stroke="#000" stroke-width="1" stroke-linejoin="round" shape-rendering="crispEdges"/>
<polygon points="1040.5,448.5 1078.5,448.5 1091.5,435.5 1053.5,435.5" fill="#a0a0a4" stroke="#000" stroke-width="1" stroke-linejoin="round" shape-rendering="crispEdges"/>
<polygon points="1078.5,448.5 1117.5,448.5 1130.5,435.5 1091.5,435.5" fill="#a0a0a4" stroke="#000" stroke-width="1" stroke-linejoin="round" shape-rendering="crispEdges"/>
<polygon points="1117.5,448.5 1155.5,448.5 1168.5,435.5 1130.5,435.5" fill="#a0a0a4" stroke="#000" stroke-width="1" stroke-linejoin="round" shape-rendering="crispEdges"/>
<polygon points="1155.5,448.5 1193.5,448.5 1206.5,435.5 1168.5,435.5" fill="#a0a0a4" stroke="#000" stroke-width="1" stroke-linejoin="round" shape-rendering="crispEdges"/>
<polygon points="1193.5,448.5 1232.5,448.5 1245.5,435.5 1206.5,435.5" fill="#a0a0a4" stroke="#000" stroke-width="1" stroke-linejoin="round" shape-rendering="crispEdges"/>
<polygon points="1232.5,448.5 1270.5,443.5 1283.5,430.5 1245.5,435.5" fill="#a0a0a4" stroke="#000" stroke-width="1" stroke-linejoin="round" shape-rendering="crispEdges"/>
<polygon points="1270.5,443.5 1309.5,421.5 1322.5,408.5 1283.5,430.5" fill="#a0a0a4" stroke="#000" stroke-width="1" stroke-linejoin="round" shape-rendering="crispEdges"/>
<polygon points="1309.5,421.5 1347.5,421.5 1360.5,408.5 1322.5,408.5" fill="#a0a0a4" stroke="#000" stroke-width="1" stroke-linejoin="round" shape-rendering="crispEdges"/>
<polygon points="1347.5,421.5 1385.5,421.5 1398.5,408.5 1360.5,408.5" fill="#a0a0a4" stroke="#000" stroke-width="1" stroke-linejoin="round" shape-rendering="crispEdges"/>
<polygon points="1385.5,421.5 1424.5,421.5 1437.5,408.5 1398.5,408.5" fill="#a0a0a4" stroke="#000" stroke-width="1" stroke-linejoin="round" shape-rendering="crispEdges"/>
<polygon points="1424.5,421.5 1462.5,421.5 1475.5,408.5 1437.5,408.5" fill="#a0a0a4" stroke="#000" stroke-width="1" stroke-linejoin="round" shape-rendering="crispEdges"/>
<polygon points="1462.5,421.5 1501.5,421.5 1514.5,408.5 1475.5,408.5" fill="#a0a0a4" stroke="#000" stroke-width="1" stroke-linejoin="round" shape-rendering="crispEdges"/>
<polygon points="1501.5,421.5 1539.5,421.5 1552.5,408.5 1514.5,408.5" fill="#a0a0a4" stroke="#000" stroke-width="1" stroke-linejoin="round" shape-rendering="crispEdges"/>
<polygon points="950.5,461.5 988.5,461.5 1001.5,448.5 963.5,448.5" fill="#a0a0a4" stroke="#000" stroke-width="1" stroke-linejoin="round" shape-rendering="crispEdges"/>
<polygon points="988.5,461.5 1027.5,461.5 1040.5,448.5 1001.5,448.5" fill="#a0a0a4" stroke="#000" stroke-width="1" stroke-linejoin="round" shape-rendering="crispEdges"/>
<polygon points="1027.5,461.5 1065.5,461.5 1078.5,448.5 1040.5,448.5" fill="#a0a0a4" stroke="#000" stroke-width="1" stroke-linejoin="round" shape-rendering="crispEdges"/>
<polygon points="1065.5,461.5 1104.5,461.5 1117.5,448.5 1078.5,448.5" fill="#a0a0a4" stroke="#000" stroke-width="1" stroke-linejoin="round" shape-rendering="crispEdges"/>
<polygon points="1104.5,461.5 1142.5,461.5 1155.5,448.5 1117.5,448.5" fill="#a0a0a4" stroke="#000" stroke-width="1" stroke-linejoin="round" shape-rendering="crispEdges"/>
<polygon points="1142.5,461.5 1180.5,461.5 1193.5,448.5 1155.5,448.5" fill="#a0a0a4" stroke="#000" stroke-width="1" stroke-linejoin="round" shape-rendering="crispEdges"/>
<polygon points="1180.5,461.5 1219.5,459.5 1232.5,446.5 1193.5,448.5" fill="#a0a0a4" stroke="#000" stroke-width="1" stroke-linejoin="round" shape-rendering="crispEdges"/>
<polygon points="1219.5,459.5 1257.5,449.5 1270.5,436.5 1232.5,446.5" fill="#a0a0a4" stroke="#000" stroke-width="1" stroke-linejoin="round" shape-rendering="crispEdges"/>
<polygon points="1257.5,449.5 1296.5,434.5 1309.5,421.5 1270.5,436.5" fill="#a0a0a4" stroke="#000" stroke-width="1" stroke-linejoin="round" shape-rendering="crispEdges"/>
<polygon points="1296.5,434.5 1334.5,432.5 1347.5,419.5 1309.5,421.5" fill="#a0a0a4" stroke="#000" stroke-width="1" stroke-linejoin="round" shape-rendering="crispEdges"/>
<polygon points="1334.5,432.5 1372.5,432.5 1385.5,419.5 1347.5,419.5" fill="#a0a0a4" stroke="#000" stroke-width="1" stroke-linejoin="round" shape-rendering="crispEdges"/>
<polygon points="1372.5,432.5 1411.5,432.5 1424.5,419.5 1385.5,419.5" fill="#a0a0a4" stroke="#000" stroke-width="1" stroke-linejoin="round" shape-rendering="crispEdges"/>
<polygon points="1411.5,432.5 1449.5,432.5 1462.5,419.5 1424.5,419.5" fill="#a0a0a4" stroke="#000" stroke-width="1" stroke-linejoin="round" shape-rendering="crispEdges"/>
<polygon points="1449.5,432.5 1488.5,432.5 1501.5,419.5 1462.5,419.5" fill="#a0a0a4" stroke="#000" stroke-width="1" stroke-linejoin="round" shape-rendering="crispEdges"/>
<polygon points="1488.5,432.5 1526.5,432.5 1539.5,419.5 1501.5,419.5" fill="#a0a0a4" stroke="#000" stroke-width="1" stroke-linejoin="round" shape-rendering="crispEdges"/>
<polygon points="937.5,474.5 975.5,474.5 988.5,461.5 950.5,461.5" fill="#a0a0a4" stroke="#000" stroke-width="1" stroke-linejoin="round" shape-rendering="crispEdges"/>
<polygon points="975.5,474.5 1014.5,474.5 1027.5,461.5 988.5,461.5" fill="#a0a0a4" stroke="#000" stroke-width="1" stroke-linejoin="round" shape-rendering="crispEdges"/>
<polygon points="1014.5,474.5 1052.5,474.5 1065.5,461.5 1027.5,461.5" fill="#a0a0a4" stroke="#000" stroke-width="1" stroke-linejoin="round" shape-rendering="crispEdges"/>
<polygon points="1052.5,474.5 1091.5,474.5 1104.5,461.5 1065.5,461.5" fill="#a0a0a4" stroke="#000" stroke-width="1" stroke-linejoin="round" shape-rendering="crispEdges"/>
<polygon points="1091.5,474.5 1129.5,474.5 1142.5,461.5 1104.5,461.5" fill="#a0a0a4" stroke="#000" stroke-width="1" stroke-linejoin="round" shape-rendering="crispEdges"/>
<polygon points="1129.5,474.5 1167.5,471.5 1180.5,458.5 1142.5,461.5" fill="#a0a0a4" stroke="#000" stroke-width="1" stroke-linejoin="round" shape-rendering="crispEdges"/>
<polygon points="1167.5,471.5 1206.5,464.5 1219.5,451.5 1180.5,458.5" fill="#a0a0a4" stroke="#000" stroke-width="1" stroke-linejoin="round" shape-rendering="crispEdges"/>
<polygon points="1206.5,464.5 1244.5,452.5 1257.5,439.5 1219.5,451.5" fill="#a0a0a4" stroke="#000" stroke-width="1" stroke-linejoin="round" shape-rendering="crispEdges"/>
<polygon points="1244.5,452.5 1283.5,441.5 1296.5,428.5 1257.5,439.5" fill="#a0a0a4" stroke="#000" stroke-width="1" stroke-linejoin="round" shape-rendering="crispEdges"/>
<polygon points="1283.5,441.5 1321.5,436.5 1334.5,423.5 1296.5,428.5" fill="#a0a0a4" stroke="#000" stroke-width="1" stroke-linejoin="round" shape-rendering="crispEdges"/>
<polygon points="1321.5,436.5 1359.5,436.5 1372.5,423.5 1334.5,423.5" fill="#a0a0a4" stroke="#000" stroke-width="1" stroke-linejoin="round" shape-rendering="crispEdges"/>
<polygon points="1359.5,436.5 1398.5,436.5 1411.5,423.5 1372.5,423.5" fill="#a0a0a4" stroke="#000" stroke-width="1" stroke-linejoin="round" shape-rendering="crispEdges"/>
<polygon points="1398.5,436.5 1436.5,436.5 1449.5,423.5 1411.5,423.5" fill="#a0a0a4" stroke="#000" stroke-width="1" stroke-linejoin="round" shape-rendering="crispEdges"/>
<polygon points="1436.5,436.5 1475.5,436.5 1488.5,423.5 1449.5,423.5" fill="#a0a0a4" stroke="#000" stroke-width="1" stroke-linejoin="round" shape-rendering="crispEdges"/>
<polygon points="1475.5,436.5 1513.5,436.5 1526.5,423.5 1488.5,423.5" fill="#a0a0a4" stroke="#000" stroke-width="1" stroke-linejoin="round" shape-rendering="crispEdges"/>
<polygon points="924.5,487.5 962.5,487.5 975.5,474.5 937.5,474.5" fill="#a0a0a4" stroke="#000" stroke-width="1" stroke-linejoin="round" shape-rendering="crispEdges"/>
<polygon points="962.5,487.5 1001.5,487.5 1014.5,474.5 975.5,474.5" fill="#a0a0a4" stroke="#000" stroke-width="1" stroke-linejoin="round" shape-rendering="crispEdges"/>
<polygon points="1001.5,487.5 1039.5,487.5 1052.5,474.5 1014.5,474.5" fill="#a0a0a4" stroke="#000" stroke-width="1" stroke-linejoin="round" shape-rendering="crispEdges"/>
<polygon points="1039.5,487.5 1078.5,487.5 1091.5,474.5 1052.5,474.5" fill="#a0a0a4" stroke="#000" stroke-width="1" stroke-linejoin="round" shape-rendering="crispEdges"/>
<polygon points="1078.5,487.5 1116.5,487.5 1129.5,474.5 1091.5,474.5" fill="#a0a0a4" stroke="#000" stroke-width="1" stroke-linejoin="round" shape-rendering="crispEdges"/>
<polygon points="1116.5,487.5 1154.5,478.5 1167.5,465.5 1129.5,474.5" fill="#a0a0a4" stroke="#000" stroke-width="1" stroke-linejoin="round" shape-rendering="crispEdges"/>
<polygon points="1154.5,478.5 1193.5,467.5 1206.5,454.5 1167.5,465.5" fill="#a0a0a4" stroke="#000" stroke-width="1" stroke-linejoin="round" shape-rendering="crispEdges"/>
<polygon points="1193.5,467.5 1231.5,455.5 1244.5,442.5 1206.5,454.5" fill="#a0a0a4" stroke="#000" stroke-width="1" stroke-linejoin="round" shape-rendering="crispEdges"/>
<polygon points="1231.5,455.5 1270.5,447.5 1283.5,434.5 1244.5,442.5" fill="#a0a0a4" stroke="#000" stroke-width="1" stroke-linejoin="round" shape-rendering="crispEdges"/>
<polygon points="1270.5,447.5 1308.5,442.5 1321.5,429.5 1283.5,434.5" fill="#a0a0a4" stroke="#000" stroke-width="1" stroke-linejoin="round" shape-rendering="crispEdges"/>
<polygon points="1308.5,442.5 1346.5,442.5 1359.5,429.5 1321.5,429.5" fill="#a0a0a4" stroke="#000" stroke-width="1" stroke-linejoin="round" shape-rendering="crispEdges"/>
<polygon points="1346.5,442.5 1385.5,442.5 1398.5,429.5 1359.5,429.5" fill="#a0a0a4" stroke="#000" stroke-width="1" stroke-linejoin="round" shape-rendering="crispEdges"/>
<polygon points="1385.5,442.5 1423.5,442.5 1436.5,429.5 1398.5,429.5" fill="#a0a0a4" stroke="#000" stroke-width="1" stroke-linejoin="round" shape-rendering="crispEdges"/>
<polygon points="1423.5,442.5 1462.5,442.5 1475.5,429.5 1436.5,429.5" fill="#a0a0a4" stroke="#000" stroke-width="1" stroke-linejoin="round" shape-rendering="crispEdges"/>
<polygon points="1462.5,442.5 1500.5,442.5 1513.5,429.5 1475.5,429.5" fill="#a0a0a4" stroke="#000" stroke-width="1" stroke-linejoin="round" shape-rendering="crispEdges"/>
<polygon points="911.5,500.5 949.5,500.5 962.5,487.5 924.5,487.5" fill="#a0a0a4" stroke="#000" stroke-width="1" stroke-linejoin="round" shape-rendering="crispEdges"/>
<polygon points="949.5,500.5 988.5,500.5 1001.5,487.5 962.5,487.5" fill="#a0a0a4" stroke="#000" stroke-width="1" stroke-linejoin="round" shape-rendering="crispEdges"/>
<polygon points="988.5,500.5 1026.5,500.5 1039.5,487.5 1001.5,487.5" fill="#a0a0a4" stroke="#000" stroke-width="1" stroke-linejoin="round" shape-rendering="crispEdges"/>
<polygon points="1026.5,500.5 1065.5,491.5 1078.5,478.5 1039.5,487.5" fill="#a0a0a4" stroke="#000" stroke-width="1" stroke-linejoin="round" shape-rendering="crispEdges"/>
<polygon points="1065.5,491.5 1103.5,469.5 1116.5,456.5 1078.5,478.5" fill="#a0a0a4" stroke="#000" stroke-width="1" stroke-linejoin="round" shape-rendering="crispEdges"/>
<polygon points="1103.5,469.5 1141.5,464.5 1154.5,451.5 1116.5,456.5" fill="#a0a0a4" stroke="#000" stroke-width="1" stroke-linejoin="round" shape-rendering="crispEdges"/>
<polygon points="1141.5,464.5 1180.5,463.5 1193.5,450.5 1154.5,451.5" fill="#a0a0a4" stroke="#000" stroke-width="1" stroke-linejoin="round" shape-rendering="crispEdges"/>
<polygon points="1180.5,463.5 1218.5,455.5 1231.5,442.5 1193.5,450.5" fill="#a0a0a4" stroke="#000" stroke-width="1" stroke-linejoin="round" shape-rendering="crispEdges"/>
<polygon points="1218.5,455.5 1257.5,455.5 1270.5,442.5 1231.5,442.5" fill="#a0a0a4" stroke="#000" stroke-width="1" stroke-linejoin="round" shape-rendering="crispEdges"/>
<polygon points="1257.5,455.5 1295.5,453.5 1308.5,440.5 1270.5,442.5" fill="#a0a0a4" stroke="#000" stroke-width="1" stroke-linejoin="round" shape-rendering="crispEdges"/>
<polygon points="1295.5,453.5 1333.5,453.5 1346.5,440.5 1308.5,440.5" fill="#a0a0a4" stroke="#000" stroke-width="1" stroke-linejoin="round" shape-rendering="crispEdges"/>
<polygon points="1333.5,453.5 1372.5,453.5 1385.5,440.5 1346.5,440.5" fill="#a0a0a4" stroke="#000" stroke-width="1" stroke-linejoin="round" shape-rendering="crispEdges"/>
<polygon points="1372.5,453.5 1410.5,453.5 1423.5,440.5 1385.5,440.5" fill="#a0a0a4" stroke="#000" stroke-width="1" stroke-linejoin="round" shape-rendering="crispEdges"/>
<polygon points="1410.5,453.5 1449.5,453.5 1462.5,440.5 1423.5,440.5" fill="#a0a0a4" stroke="#000" stroke-width="1" stroke-linejoin="round" shape-rendering="crispEdges"/>
<polygon points="1449.5,453.5 1487.5,453.5 1500.5,440.5 1462.5,440.5" fill="#a0a0a4" stroke="#000" stroke-width="1" stroke-linejoin="round" shape-rendering="crispEdges"/>
<path d="M911.5,277 L911.5,729" stroke="#000" stroke-width="1" fill="none" shape-rendering="crispEdges"/>
<path d="M911,728 L1488.5,728" stroke="#000" stroke-width="2" fill="none" shape-rendering="crispEdges"/>
<path d="M907,728.5 L911,728.5 M907,706.5 L911,706.5 M907,683.5 L911,683.5 M907,661.5 L911,661.5 M907,638.5 L911,638.5 M907,616.5 L911,616.5 M907,593.5 L911,593.5 M907,570.5 L911,570.5 M907,548.5 L911,548.5 M907,525.5 L911,525.5 M907,503.5 L911,503.5 M907,480.5 L911,480.5 M907,458.5 L911,458.5 M907,435.5 L911,435.5 M907,413.5 L911,413.5 M907,390.5 L911,390.5 M907,367.5 L911,367.5 M907,345.5 L911,345.5 M907,322.5 L911,322.5 M907,300.5 L911,300.5 M907,277.5 L911,277.5 M911.5,729 L911.5,733 M949.5,729 L949.5,733 M988.5,729 L988.5,733 M1026.5,729 L1026.5,733 M1065.5,729 L1065.5,733 M1103.5,729 L1103.5,733 M1141.5,729 L1141.5,733 M1180.5,729 L1180.5,733 M1218.5,729 L1218.5,733 M1257.5,729 L1257.5,733 M1295.5,729 L1295.5,733 M1333.5,729 L1333.5,733 M1372.5,729 L1372.5,733 M1410.5,729 L1410.5,733 M1449.5,729 L1449.5,733 M1487.5,729 L1487.5,733" stroke="#6a6a6a" stroke-width="1" fill="none" shape-rendering="crispEdges"/>
<path d="M909,723.5 L911,723.5 M909,717.5 L911,717.5 M909,711.5 L911,711.5 M909,700.5 L911,700.5 M909,694.5 L911,694.5 M909,689.5 L911,689.5 M909,678.5 L911,678.5 M909,672.5 L911,672.5 M909,666.5 L911,666.5 M909,655.5 L911,655.5 M909,649.5 L911,649.5 M909,644.5 L911,644.5 M909,632.5 L911,632.5 M909,627.5 L911,627.5 M909,621.5 L911,621.5 M909,610.5 L911,610.5 M909,604.5 L911,604.5 M909,599.5 L911,599.5 M909,587.5 L911,587.5 M909,582.5 L911,582.5 M909,576.5 L911,576.5 M909,565.5 L911,565.5 M909,559.5 L911,559.5 M909,554.5 L911,554.5 M909,542.5 L911,542.5 M909,537.5 L911,537.5 M909,531.5 L911,531.5 M909,520.5 L911,520.5 M909,514.5 L911,514.5 M909,508.5 L911,508.5 M909,497.5 L911,497.5 M909,492.5 L911,492.5 M909,486.5 L911,486.5 M909,475.5 L911,475.5 M909,469.5 L911,469.5 M909,463.5 L911,463.5 M909,452.5 L911,452.5 M909,446.5 L911,446.5 M909,441.5 L911,441.5 M909,430.5 L911,430.5 M909,424.5 L911,424.5 M909,418.5 L911,418.5 M909,407.5 L911,407.5 M909,401.5 L911,401.5 M909,396.5 L911,396.5 M909,384.5 L911,384.5 M909,379.5 L911,379.5 M909,373.5 L911,373.5 M909,362.5 L911,362.5 M909,356.5 L911,356.5 M909,351.5 L911,351.5 M909,339.5 L911,339.5 M909,334.5 L911,334.5 M909,328.5 L911,328.5 M909,317.5 L911,317.5 M909,311.5 L911,311.5 M909,305.5 L911,305.5 M909,294.5 L911,294.5 M909,289.5 L911,289.5 M909,283.5 L911,283.5 M921.5,729 L921.5,731 M930.5,729 L930.5,731 M940.5,729 L940.5,731 M959.5,729 L959.5,731 M969.5,729 L969.5,731 M978.5,729 L978.5,731 M997.5,729 L997.5,731 M1007.5,729 L1007.5,731 M1017.5,729 L1017.5,731 M1036.5,729 L1036.5,731 M1045.5,729 L1045.5,731 M1055.5,729 L1055.5,731 M1074.5,729 L1074.5,731 M1084.5,729 L1084.5,731 M1093.5,729 L1093.5,731 M1113.5,729 L1113.5,731 M1122.5,729 L1122.5,731 M1132.5,729 L1132.5,731 M1151.5,729 L1151.5,731 M1161.5,729 L1161.5,731 M1170.5,729 L1170.5,731 M1189.5,729 L1189.5,731 M1199.5,729 L1199.5,731 M1209.5,729 L1209.5,731 M1228.5,729 L1228.5,731 M1237.5,729 L1237.5,731 M1247.5,729 L1247.5,731 M1266.5,729 L1266.5,731 M1276.5,729 L1276.5,731 M1285.5,729 L1285.5,731 M1305.5,729 L1305.5,731 M1314.5,729 L1314.5,731 M1324.5,729 L1324.5,731 M1343.5,729 L1343.5,731 M1353.5,729 L1353.5,731 M1362.5,729 L1362.5,731 M1381.5,729 L1381.5,731 M1391.5,729 L1391.5,731 M1401.5,729 L1401.5,731 M1420.5,729 L1420.5,731 M1429.5,729 L1429.5,731 M1439.5,729 L1439.5,731 M1458.5,729 L1458.5,731 M1468.5,729 L1468.5,731 M1477.5,729 L1477.5,731" stroke="#8a8a8a" stroke-width="1" fill="none" shape-rendering="crispEdges"/>
<g font-family='"Liberation Sans", sans-serif' font-size="18" fill="#000"><text x="906.5" y="735.2" text-anchor="end">0</text><text x="906.5" y="712.65" text-anchor="end">0,1</text><text x="906.5" y="690.1" text-anchor="end">0,2</text><text x="906.5" y="667.55" text-anchor="end">0,3</text><text x="906.5" y="645" text-anchor="end">0,4</text><text x="906.5" y="622.45" text-anchor="end">0,5</text><text x="906.5" y="599.9" text-anchor="end">0,6</text><text x="906.5" y="577.35" text-anchor="end">0,7</text><text x="906.5" y="554.8" text-anchor="end">0,8</text><text x="906.5" y="532.25" text-anchor="end">0,9</text><text x="906.5" y="509.7" text-anchor="end">1</text><text x="906.5" y="487.15" text-anchor="end">1,1</text><text x="906.5" y="464.6" text-anchor="end">1,2</text><text x="906.5" y="442.05" text-anchor="end">1,3</text><text x="906.5" y="419.5" text-anchor="end">1,4</text><text x="906.5" y="396.95" text-anchor="end">1,5</text><text x="906.5" y="374.4" text-anchor="end">1,6</text><text x="906.5" y="351.85" text-anchor="end">1,7</text><text x="906.5" y="329.3" text-anchor="end">1,8</text><text x="906.5" y="306.75" text-anchor="end">1,9</text><text x="906.5" y="284.2" text-anchor="end">2</text><text x="911.5" y="751.8" text-anchor="middle">0</text><text x="949.9" y="751.8" text-anchor="middle">8</text><text x="988.3" y="751.8" text-anchor="middle">16</text><text x="1026.7" y="751.8" text-anchor="middle">24</text><text x="1065.1" y="751.8" text-anchor="middle">32</text><text x="1103.5" y="751.8" text-anchor="middle">40</text><text x="1141.9" y="751.8" text-anchor="middle">48</text><text x="1180.3" y="751.8" text-anchor="middle">56</text><text x="1218.7" y="751.8" text-anchor="middle">64</text><text x="1257.1" y="751.8" text-anchor="middle">72</text><text x="1295.5" y="751.8" text-anchor="middle">80</text><text x="1333.9" y="751.8" text-anchor="middle">88</text><text x="1372.3" y="751.8" text-anchor="middle">96</text><text x="1410.7" y="751.8" text-anchor="middle">104</text><text x="1449.1" y="751.8" text-anchor="middle">112</text><text x="1487.5" y="751.8" text-anchor="middle">120</text></g>
<g font-family='"Liberation Sans", sans-serif' font-size="18" fill="#0000ff"><text x="1199.5" y="773" text-anchor="middle">Нагрузка (% Нагрузки)</text><text x="1300.8" y="6" text-anchor="middle" textLength="235.3" lengthAdjust="spacingAndGlyphs">Коэффициент обогащения 1</text><text transform="translate(871.8 501.5) rotate(-90)" text-anchor="middle">Коэффициент</text></g>
<defs><filter id="lb" x="-5%" y="-5%" width="110%" height="110%"><feGaussianBlur stdDeviation="0.7"/></filter></defs><rect x="1781.0" y="35.0" width="102.5" height="306.5" fill="#000" filter="url(#lb)"/>
<rect x="1777.5" y="31.5" width="102" height="306" fill="#fff" stroke="#000" stroke-width="1"/>
<g font-family='"Liberation Sans", sans-serif' font-size="12.25" fill="#000"><rect x="1783.5" y="36.5" width="12" height="9.5" fill="#0000ff" stroke="#000" stroke-width="1"/><text x="1803.2" y="45.9">350 об/мин</text><rect x="1783.5" y="51.5" width="12" height="9.5" fill="#ffffff" stroke="#000" stroke-width="1"/><text x="1803.2" y="60.9">700 об/мин</text><rect x="1783.5" y="66.5" width="12" height="9.5" fill="#808080" stroke="#000" stroke-width="1"/><text x="1803.2" y="75.9">1050 об/мин</text><rect x="1783.5" y="81.5" width="12" height="9.5" fill="#ff00ff" stroke="#000" stroke-width="1"/><text x="1803.2" y="90.9">1400 об/мин</text><rect x="1783.5" y="96.5" width="12" height="9.5" fill="#008080" stroke="#000" stroke-width="1"/><text x="1803.2" y="105.9">1750 об/мин</text><rect x="1783.5" y="111.5" width="12" height="9.5" fill="#000080" stroke="#000" stroke-width="1"/><text x="1803.2" y="120.9">2100 об/мин</text><rect x="1783.5" y="126.5" width="12" height="9.5" fill="#800000" stroke="#000" stroke-width="1"/><text x="1803.2" y="135.9">2450 об/мин</text><rect x="1783.5" y="141.5" width="12" height="9.5" fill="#00ff00" stroke="#000" stroke-width="1"/><text x="1803.2" y="150.9">2800 об/мин</text><rect x="1783.5" y="156.5" width="12" height="9.5" fill="#808000" stroke="#000" stroke-width="1"/><text x="1803.2" y="165.9">3150 об/мин</text><rect x="1783.5" y="171.5" width="12" height="9.5" fill="#800080" stroke="#000" stroke-width="1"/><text x="1803.2" y="180.9">3500 об/мин</text><rect x="1783.5" y="186.5" width="12" height="9.5" fill="#00ffff" stroke="#000" stroke-width="1"/><text x="1803.2" y="195.9">3850 об/мин</text><rect x="1783.5" y="201.5" width="12" height="9.5" fill="#000000" stroke="#000" stroke-width="1"/><text x="1803.2" y="210.9">4200 об/мин</text><rect x="1783.5" y="216.5" width="12" height="9.5" fill="#c0dcc0" stroke="#000" stroke-width="1"/><text x="1803.2" y="225.9">4550 об/мин</text><rect x="1783.5" y="231.5" width="12" height="9.5" fill="#a6caf0" stroke="#000" stroke-width="1"/><text x="1803.2" y="240.9">4900 об/мин</text><rect x="1783.5" y="246.5" width="12" height="9.5" fill="#fffbf0" stroke="#000" stroke-width="1"/><text x="1803.2" y="255.9">5250 об/мин</text><rect x="1783.5" y="261.5" width="12" height="9.5" fill="#a0a0a4" stroke="#000" stroke-width="1"/><text x="1803.2" y="270.9">5600 об/мин</text><rect x="1783.5" y="276.5" width="12" height="9.5" fill="#a0a0a4" stroke="#000" stroke-width="1"/><text x="1803.2" y="285.9">5950 об/мин</text><rect x="1783.5" y="291.5" width="12" height="9.5" fill="#a0a0a4" stroke="#000" stroke-width="1"/><text x="1803.2" y="300.9">6300 об/мин</text><rect x="1783.5" y="306.5" width="12" height="9.5" fill="#a0a0a4" stroke="#000" stroke-width="1"/><text x="1803.2" y="315.9">6650 об/мин</text><rect x="1783.5" y="321.5" width="12" height="9.5" fill="#a0a0a4" stroke="#000" stroke-width="1"/><text x="1803.2" y="330.9">7000 об/мин</text></g>
</svg>
<!-- toolbar -->
<div class="abs" style="left:1559px;top:815px;width:177px;height:33px;box-sizing:border-box;border-top:1px solid #fff;border-left:1px solid #fff;border-right:1px solid #a0a0a0;border-bottom:1px solid #a0a0a0;background:#f0f0f0;overflow:hidden">
 <div class="abs" style="left:4px;top:3px;width:1px;height:25px;background:#a0a0a0"></div>
 <div class="abs" style="left:5px;top:3px;width:1px;height:25px;background:#fff"></div>
 <div class="abs" style="left:14px;top:6px;width:81px;height:21px;box-sizing:border-box;border:1px solid #adadad;background:#e1e1e1;text-align:center;line-height:20px;font-size:12.4px">Ок</div>
 <div class="abs" style="left:104px;top:6px;width:70px;height:21px;box-sizing:border-box;border:1px solid #adadad;border-right:none;background:#e1e1e1;text-align:left;padding-left:18px;line-height:20px;font-size:11.8px;white-space:nowrap;overflow:hidden">Отмена</div>
</div>
</body></html>
